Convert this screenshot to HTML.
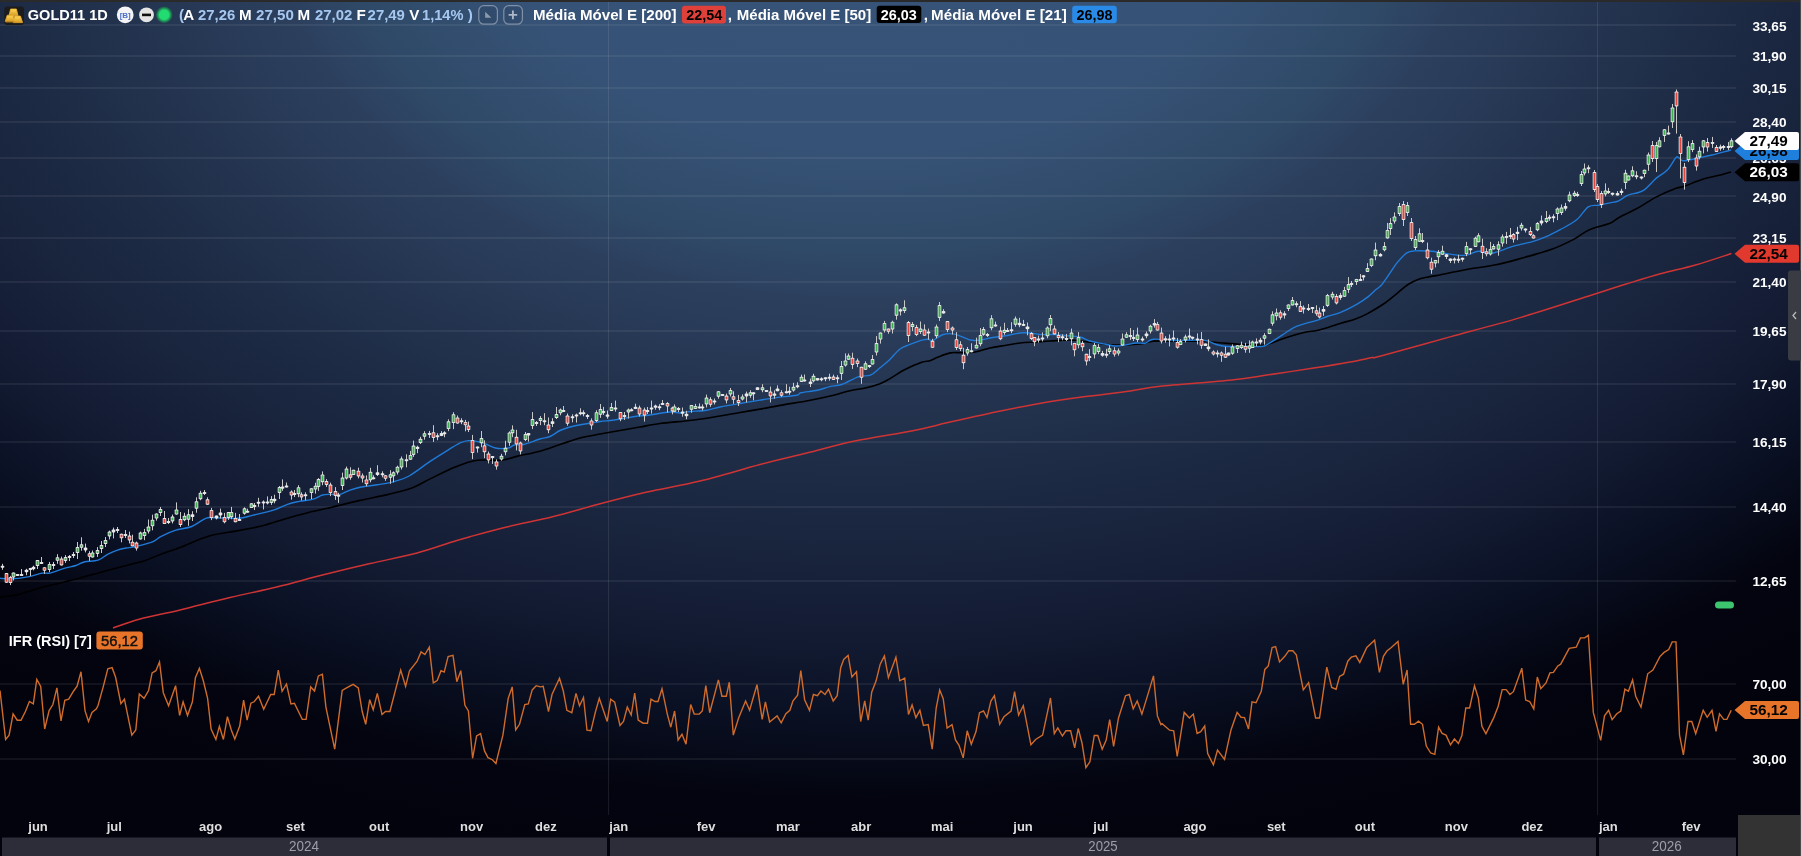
<!DOCTYPE html><html><head><meta charset="utf-8"><title>GOLD11 1D</title><style>
*{margin:0;padding:0;box-sizing:border-box}
html,body{width:1801px;height:856px;overflow:hidden;background:#02030c}
body{position:relative;font-family:"Liberation Sans",sans-serif}
#bg{position:absolute;left:0;top:0;width:1801px;height:856px;
 background: radial-gradient(ellipse 1500px 1000px at 870px -100px, #375478 0%, #365276 25%, #2f4a68 35%, #2c405e 40%, #1e2c46 57%, #19243d 65%, #161f38 70%, #141c34 73%, #0b1226 80.5%, #03040f 90%, #02030c 100%);}
#top{position:absolute;left:0;top:0;width:1800px;height:2px;background:#2a2a2a;border-bottom:1px solid rgba(42,42,42,0.5)}
svg{position:absolute;left:0;top:0;will-change:transform}
text{font-family:"Liberation Sans",sans-serif}
</style></head><body>
<div id="bg"></div>
<svg width="1801" height="856" viewBox="0 0 1801 856">
<g stroke="#ffffff" stroke-opacity="0.13" stroke-width="1">
<line x1="0" y1="25" x2="1736" y2="25"/>
<line x1="0" y1="56" x2="1736" y2="56"/>
<line x1="0" y1="88" x2="1736" y2="88"/>
<line x1="0" y1="122" x2="1736" y2="122"/>
<line x1="0" y1="158" x2="1736" y2="158"/>
<line x1="0" y1="196" x2="1736" y2="196"/>
<line x1="0" y1="238" x2="1736" y2="238"/>
<line x1="0" y1="282" x2="1736" y2="282"/>
<line x1="0" y1="331" x2="1736" y2="331"/>
<line x1="0" y1="384" x2="1736" y2="384"/>
<line x1="0" y1="442" x2="1736" y2="442"/>
<line x1="0" y1="507" x2="1736" y2="507"/>
<line x1="0" y1="581" x2="1736" y2="581"/>
<line x1="0" y1="684" x2="1736" y2="684"/>
<line x1="0" y1="759" x2="1736" y2="759"/>
</g>
<g stroke="#ffffff" stroke-opacity="0.09" stroke-width="1">
<line x1="608.5" y1="2" x2="608.5" y2="815"/><line x1="1597.5" y1="2" x2="1597.5" y2="815"/>
</g>
<path fill="none" stroke="#cf3434" stroke-width="1.5" d="M113,628 C117.5,626.5 128.8,622 140,619 C151.2,616 165,613.6 180,610 C195,606.4 213.9,601.3 230,597.5 C246.1,593.7 261.1,590.8 276.7,587 C292.3,583.2 307.9,578.7 323.5,574.8 C339.1,570.9 354.6,567.2 370.2,563.6 C385.8,560 403.4,556.6 417,553 C430.6,549.4 443.2,544.7 452,542 C460.8,539.3 460.9,539.2 470,536.7 C479.1,534.2 492.8,530.4 506.7,527 C520.6,523.6 537.9,520.5 553.5,516.6 C569.1,512.7 584.6,507.8 600.2,503.7 C615.8,499.6 630.4,495.8 647,492 C663.6,488.2 681.2,485.6 700,481 C718.8,476.4 742.2,469.3 760,464.6 C777.8,459.9 791.2,456.9 806.8,453 C822.4,449.1 838,444.6 853.6,441.3 C869.2,438 888.6,435.1 900.3,433 C912,430.9 915.8,430.1 923.7,428.4 C931.7,426.7 937,425.1 948,422.6 C959,420.1 975.2,416.3 990,413.2 C1004.8,410.1 1021.2,406.6 1036.8,403.9 C1052.4,401.2 1068,398.9 1083.6,396.8 C1099.2,394.7 1117.6,392.8 1130.3,391 C1143,389.2 1143.1,388.1 1160,386.3 C1176.9,384.5 1214,381.9 1231.8,380 C1249.6,378.1 1253.2,377.1 1266.8,375.1 C1280.4,373.1 1300,370.2 1313.6,368.1 C1327.2,366 1338.9,364.1 1348.6,362.3 C1358.3,360.6 1366.8,358.6 1372,357.6 C1377.2,356.6 1367,359.6 1380,356.2 C1393,352.8 1426.6,343.3 1450,336.9 C1473.4,330.5 1496.8,324.5 1520.2,317.6 C1543.6,310.7 1572.8,301.1 1590.3,295.5 C1607.8,289.9 1613.7,287.9 1625.4,284.3 C1637.1,280.7 1648.7,277 1660.4,273.8 C1672.1,270.6 1683.7,268.4 1695.5,265 C1707.3,261.6 1725.4,255.4 1731.4,253.5"/>
<path fill="none" stroke="#000000" stroke-width="1.6" d="M0,597 C2.9,596.6 11.7,596 17.5,594.7 C23.3,593.4 29.1,591 35,589.4 C40.9,587.8 46.4,586.3 52.6,584.8 C58.8,583.2 65.6,581.9 72.4,580.1 C79.2,578.3 87,576 93.4,574.2 C99.8,572.5 105.2,571.2 111,569.6 C116.8,568 122.7,566.5 128.5,564.9 C134.3,563.3 140.2,562.2 146,560.2 C151.8,558.2 157.8,555.3 163.5,553.2 C169.2,551.1 172.4,550.4 180,547.5 C187.6,544.6 199.5,538.7 209.2,535.9 C218.9,533.1 229.6,532.3 238.4,530.6 C247.2,528.9 254,527.9 261.8,525.9 C269.6,523.9 277.3,521.1 285.1,518.9 C292.9,516.7 300.7,514.5 308.5,512.5 C316.3,510.6 323.3,509.2 331.9,507.2 C340.5,505.2 350.4,502.6 360,500.4 C369.6,498.2 380.4,496.2 389.2,494.1 C398,492 405.8,490.2 412.6,487.7 C419.4,485.2 423.3,482.2 430.1,478.9 C436.9,475.6 446.6,470.7 453.4,467.8 C460.2,464.9 466.1,462.7 471,461.4 C475.9,460.1 477.4,460.2 482.6,460 C487.9,459.8 496.6,460.6 502.5,460 C508.4,459.4 511.5,457.6 517.7,456.1 C524,454.6 533,453.1 540,451.2 C547,449.3 553.3,446.7 560,444.5 C566.7,442.3 573.3,439.8 580,438 C586.7,436.2 593.3,435.2 600,434 C606.7,432.8 613.3,431.7 620,430.5 C626.7,429.3 633.3,428.2 640,427 C646.7,425.8 652.5,424.5 660,423.5 C667.5,422.5 677.5,421.8 685,421 C692.5,420.2 699.2,419.3 705,418.5 C710.8,417.7 714.2,417 720,416 C725.8,415 733.3,413.6 740,412.5 C746.7,411.4 752.6,410.4 760,409.1 C767.4,407.8 776.3,406 784.5,404.6 C792.7,403.2 800.9,402.1 809.1,400.5 C817.3,398.9 826.8,396.8 833.6,395.2 C840.4,393.6 844.5,391.9 850,390.7 C855.5,389.5 861.4,389 866.4,387.8 C871.4,386.6 876.2,385.1 880,383.7 C883.8,382.2 884.9,381.5 889.1,379.1 C893.4,376.7 900,372.1 905.5,369.3 C911,366.5 917.7,363.7 921.8,362.3 C925.9,360.9 927.3,361.6 930,360.7 C932.7,359.8 934.8,358.3 938.2,357 C941.6,355.7 946.9,353.6 950.5,352.9 C954.1,352.2 955.9,352.8 960,352.6 C964.1,352.5 970,352.8 975,352 C980,351.2 985,349.1 990,348 C995,346.9 1000,346.3 1005,345.5 C1010,344.7 1015,343.6 1020,343 C1025,342.4 1030,342.3 1035,342 C1040,341.7 1044.2,341.3 1050,341 C1055.8,340.7 1064.2,339.9 1070,340 C1075.8,340.1 1080,340.9 1085,341.5 C1090,342.1 1095,342.9 1100,343.5 C1105,344.1 1108.3,344.9 1115,345 C1121.7,345.1 1133.6,344.6 1140,344 C1146.4,343.4 1147.2,341.6 1153.3,341.1 C1159.4,340.6 1168.3,340.9 1176.7,341 C1185.1,341.1 1196.8,341.2 1203.9,341.5 C1211,341.8 1213.6,342.2 1219.4,342.7 C1225.2,343.1 1232.4,343.8 1238.9,344.2 C1245.4,344.6 1253.7,344.9 1258.3,345 C1262.9,345.1 1262.7,345.8 1266.7,344.8 C1270.7,343.8 1275.9,341.1 1282.1,339 C1288.3,336.9 1297.8,334 1304,332.5 C1310.2,331 1313.4,331.5 1319.4,330 C1325.4,328.5 1334,325.3 1340,323.5 C1346,321.7 1350.9,320.6 1355.4,319 C1359.9,317.4 1362.1,316.6 1367,313.9 C1371.9,311.2 1379.9,306.5 1385,303 C1390.1,299.5 1394,295.9 1397.8,292.8 C1401.6,289.7 1404.6,286.7 1408,284.5 C1411.4,282.3 1414.7,280.6 1418,279.4 C1421.3,278.1 1424.8,277.7 1428,277 C1431.2,276.3 1431,276.6 1437.5,275.4 C1444,274.1 1457,271.3 1466.7,269.5 C1476.5,267.7 1486.2,266.9 1496,264.8 C1505.8,262.8 1516,259.7 1525.2,257.2 C1534.4,254.7 1542.7,252.6 1550.9,249.6 C1559.1,246.6 1567.8,242.4 1574.2,239.1 C1580.6,235.8 1583.4,232.3 1589.4,229.7 C1595.4,227.1 1605.1,225.3 1610,223.3 C1614.9,221.3 1614.1,220.2 1618.7,217.7 C1623.3,215.2 1631.2,211.7 1637.4,208.3 C1643.6,204.9 1649.8,200.4 1656,197.1 C1662.2,193.8 1670.1,190.5 1674.8,188.7 C1679.5,186.9 1679.4,187.9 1684.1,186.3 C1688.8,184.7 1696.6,181.2 1702.8,179.3 C1709,177.4 1716.8,175.9 1721.5,174.7 C1726.2,173.5 1729.4,172.4 1731,171.9"/>
<path fill="none" stroke="#1f7ad8" stroke-width="1.4" d="M0,578.3 C1.9,578.4 6.8,579.2 11.7,578.9 C16.6,578.6 24.1,577.6 29.2,576.6 C34.2,575.6 38.5,573.7 42,573.1 C45.5,572.5 46.5,573.9 50.2,573.1 C53.9,572.3 59.9,569.7 64.2,568.4 C68.5,567.1 72.6,566.6 75.9,565.5 C79.2,564.4 80.4,562.9 84.1,562 C87.8,561.1 94.2,561.5 98.1,560.2 C102,558.9 104.4,556 107.5,554.4 C110.6,552.8 113.7,551.4 116.8,550.3 C119.9,549.2 123.3,548.6 126.2,548 C129.1,547.4 130,547.8 134.3,546.8 C138.6,545.8 147.4,543.9 151.9,542.1 C156.4,540.4 157.3,538.2 161.2,536.3 C165.1,534.3 170.1,532 175.2,530.4 C180.3,528.8 186.6,528.5 191.7,526.5 C196.8,524.5 201.8,519.8 205.7,518.3 C209.6,516.8 209.6,517.7 215,517.7 C220.4,517.7 232.2,518.7 238.4,518.3 C244.6,517.9 246.6,516.8 252.4,515.4 C258.2,514 267.5,512 273.4,510.2 C279.2,508.4 283.2,505.8 287.5,504.3 C291.8,502.8 294.8,502.3 299.1,501.4 C303.4,500.5 309.3,500.2 313.2,499.1 C317.1,498 319.6,495.8 322.5,495 C325.4,494.2 327.8,494.5 330.7,494.4 C333.6,494.3 336.9,495.1 340,494.4 C343.1,493.7 346.1,491.5 349.4,490.3 C352.7,489.1 355.3,488.1 360,487.2 C364.7,486.3 371.7,485.8 377.5,484.8 C383.3,483.8 389.7,482.8 395,481.3 C400.3,479.8 403.2,479.3 409.1,476 C415,472.7 423.7,465.7 430.1,461.4 C436.5,457.1 442.7,453.3 447.6,450.3 C452.5,447.3 455.8,444.9 459.3,443.3 C462.8,441.7 464.7,440.7 468.6,440.6 C472.5,440.5 478.1,441.5 482.6,442.7 C487.1,443.9 491.2,447.1 495.5,448 C499.8,448.9 505.2,448.5 508.3,448 C511.4,447.5 511.7,445.6 514.2,445 C516.7,444.4 519.2,445.5 523.5,444.5 C527.8,443.5 535.6,440.3 540,439 C544.4,437.7 546.7,437.9 550,436.5 C553.3,435.1 556.7,432.1 560,430.5 C563.3,428.9 565.8,428.1 570,427 C574.2,425.9 580,424.9 585,424 C590,423.1 595.8,422.1 600,421.5 C604.2,420.9 606.7,420.9 610,420.5 C613.3,420.1 615.8,419.7 620,419 C624.2,418.3 630,417.2 635,416.5 C640,415.8 644.2,415.8 650,415 C655.8,414.2 665,412.3 670,412 C675,411.7 676.7,413.1 680,413 C683.3,412.9 685.8,411.9 690,411.5 C694.2,411.1 700,411.2 705,410.5 C710,409.8 714.2,408.2 720,407 C725.8,405.8 733.3,404.6 740,403.5 C746.7,402.4 753.9,401.1 760,400.1 C766.1,399.1 770.3,398.4 776.4,397.6 C782.5,396.8 792.7,396 796.8,395.2 C800.9,394.4 797.5,393.5 800.9,392.7 C804.3,391.9 812.5,391.3 817.3,390.3 C822.1,389.3 825.5,387.6 829.6,386.6 C833.7,385.6 837,386.1 841.8,384.5 C846.6,382.9 853.4,378.4 858.2,376.8 C863,375.2 866.9,376.6 870.5,375.1 C874.1,373.6 876.9,370.3 880,367.8 C883.1,365.3 885.8,363.4 889.1,360.3 C892.4,357.2 896.3,351.8 899.7,349.2 C903.1,346.6 905.8,346.2 909.5,344.7 C913.2,343.2 918.6,341.1 921.8,340.2 C924.9,339.3 926.6,339.1 928.4,339.2 C930.2,339.3 930,341.4 932.5,340.6 C935,339.8 939.4,335.6 943.1,334.5 C946.8,333.4 950.1,333.2 954.6,334.1 C959.1,335 965.8,339 970,340 C974.2,341 976.7,340.3 980,340 C983.3,339.7 986.7,338.6 990,338 C993.3,337.4 996.7,337 1000,336.5 C1003.3,336 1006.7,335.6 1010,335 C1013.3,334.4 1016.7,333.3 1020,333 C1023.3,332.7 1026.7,332.8 1030,333 C1033.3,333.2 1035.8,334.2 1040,334.5 C1044.2,334.8 1050.8,334.3 1055,334.5 C1059.2,334.7 1060.8,335.1 1065,335.5 C1069.2,335.9 1075.8,336.1 1080,337 C1084.2,337.9 1085.8,339.8 1090,341 C1094.2,342.2 1100.8,343.2 1105,344 C1109.2,344.8 1111.7,345.8 1115,346 C1118.3,346.2 1121.5,345.5 1125,345 C1128.5,344.5 1132.8,343.3 1136.2,343 C1139.6,342.7 1142.8,343.6 1145.6,343 C1148.4,342.4 1148.1,339.6 1153.3,339.2 C1158.5,338.8 1168.3,340.1 1176.7,340.3 C1185.1,340.5 1197.4,339.7 1203.9,340.3 C1210.4,340.9 1211.6,343.2 1215.5,344.2 C1219.4,345.2 1222,346.1 1227.2,346.5 C1232.4,346.9 1241,346.5 1246.6,346.5 C1252.2,346.5 1257.2,346.8 1260.6,346.5 C1263.9,346.2 1263.1,346.7 1266.7,344.8 C1270.3,342.9 1277.2,338.2 1282.1,335.1 C1287,332 1290.5,328.9 1296.3,326.4 C1302.1,323.9 1311.7,321.9 1316.8,320.3 C1321.9,318.7 1323.2,317.8 1327.1,316.5 C1331,315.2 1335.1,314.6 1340,312.6 C1344.9,310.6 1352,307 1356.7,304.3 C1361.4,301.6 1365.1,299.1 1368.3,296.6 C1371.5,294.1 1373.9,291.3 1376,289.5 C1378.1,287.7 1379.4,287.4 1381.1,285.6 C1382.8,283.8 1384.5,281.1 1386.2,278.6 C1387.9,276.1 1389.5,273.6 1391.4,270.8 C1393.3,268 1395.2,264.9 1397.8,261.9 C1400.4,258.9 1404,254.7 1406.8,252.9 C1409.6,251.1 1410.4,251.2 1414.6,250.9 C1418.8,250.6 1426.9,250.9 1431.7,251.3 C1436.5,251.7 1438,252.4 1443.4,253.1 C1448.9,253.8 1458.6,255.7 1464.4,255.4 C1470.2,255.1 1473.7,251.7 1478.4,251.3 C1483.1,250.9 1486.6,254 1492.4,253.1 C1498.2,252.2 1506.7,248 1513.5,246.1 C1520.3,244.2 1527.8,243 1533.3,241.4 C1538.8,239.8 1541.7,238.6 1546.2,236.7 C1550.7,234.8 1555.1,232.5 1560.2,229.7 C1565.3,226.9 1571.9,223.6 1576.6,219.8 C1581.3,216 1584.6,209.3 1588.3,206.9 C1592,204.5 1595.2,205.9 1598.8,205.2 C1602.4,204.5 1606.7,203.6 1610,202.9 C1613.3,202.2 1615.7,202.1 1618.7,200.8 C1621.7,199.5 1624,196.9 1628,195.2 C1632,193.5 1638.3,193.4 1643,190.6 C1647.7,187.8 1652,181.8 1656,178.4 C1660,175 1664,173.4 1667.3,170 C1670.6,166.6 1673.8,160 1675.7,157.9 C1677.6,155.8 1677.2,157 1678.5,157.5 C1679.8,158 1680.1,160.6 1683.2,160.7 C1686.3,160.8 1692.4,159.1 1697.2,158.2 C1702,157.2 1706.5,156.4 1712.1,155 C1717.7,153.6 1727.8,150.8 1731,150"/>
<g>
<rect x="2" y="563.8" width="1" height="6" fill="#c8c8c8"/>
<rect x="0.7" y="565.8" width="3.6" height="2" rx="0.8" fill="#e8e8e8"/>
<rect x="6" y="573.1" width="1" height="9.7" fill="#c8c8c8"/>
<rect x="4.7" y="573.1" width="3.6" height="9.7" rx="0.8" fill="#e8e8e8"/>
<rect x="5.5" y="574.1" width="2" height="7.7" fill="#e0463c"/>
<rect x="10" y="575.9" width="1" height="9.2" fill="#c8c8c8"/>
<rect x="8.7" y="576.9" width="3.6" height="6.2" rx="0.8" fill="#e8e8e8"/>
<rect x="9.5" y="577.9" width="2" height="4.2" fill="#e0463c"/>
<rect x="13" y="572.5" width="1" height="8" fill="#c8c8c8"/>
<rect x="11.7" y="572.5" width="3.6" height="5" rx="0.8" fill="#e8e8e8"/>
<rect x="12.5" y="573.5" width="2" height="3" fill="#3fae4f"/>
<rect x="17" y="574" width="1" height="2" fill="#c8c8c8"/>
<rect x="15.7" y="574" width="3.6" height="2" rx="0.8" fill="#e8e8e8"/>
<rect x="21" y="569" width="1" height="7" fill="#c8c8c8"/>
<rect x="19.7" y="574" width="3.6" height="2" rx="0.8" fill="#e8e8e8"/>
<rect x="26" y="568.8" width="1" height="6.4" fill="#c8c8c8"/>
<rect x="24.7" y="569.8" width="3.6" height="2.4" rx="0.8" fill="#e8e8e8"/>
<rect x="30" y="567.9" width="1" height="8.2" fill="#c8c8c8"/>
<rect x="28.7" y="567.9" width="3.6" height="2.2" rx="0.8" fill="#e8e8e8"/>
<rect x="33" y="565.7" width="1" height="4.6" fill="#c8c8c8"/>
<rect x="31.7" y="566.7" width="3.6" height="2.6" rx="0.8" fill="#e8e8e8"/>
<rect x="37" y="560" width="1" height="9" fill="#c8c8c8"/>
<rect x="35.7" y="560" width="3.6" height="6" rx="0.8" fill="#e8e8e8"/>
<rect x="36.5" y="561" width="2" height="4" fill="#3fae4f"/>
<rect x="41" y="557" width="1" height="7" fill="#c8c8c8"/>
<rect x="39.7" y="562" width="3.6" height="2" rx="0.8" fill="#e8e8e8"/>
<rect x="44" y="567.2" width="1" height="6.6" fill="#c8c8c8"/>
<rect x="42.7" y="567.2" width="3.6" height="3.6" rx="0.8" fill="#e8e8e8"/>
<rect x="43.5" y="568.2" width="2" height="1.6" fill="#e0463c"/>
<rect x="49" y="561.9" width="1" height="10.2" fill="#c8c8c8"/>
<rect x="47.7" y="563.9" width="3.6" height="6.2" rx="0.8" fill="#e8e8e8"/>
<rect x="48.5" y="564.9" width="2" height="4.2" fill="#3fae4f"/>
<rect x="53" y="561.9" width="1" height="7.2" fill="#c8c8c8"/>
<rect x="51.7" y="563.9" width="3.6" height="2.2" rx="0.8" fill="#e8e8e8"/>
<rect x="57" y="554.2" width="1" height="9.6" fill="#c8c8c8"/>
<rect x="55.7" y="557.2" width="3.6" height="3.6" rx="0.8" fill="#e8e8e8"/>
<rect x="56.5" y="558.2" width="2" height="1.6" fill="#3fae4f"/>
<rect x="61" y="556.6" width="1" height="8.8" fill="#c8c8c8"/>
<rect x="59.7" y="558.6" width="3.6" height="6.8" rx="0.8" fill="#e8e8e8"/>
<rect x="60.5" y="559.6" width="2" height="4.8" fill="#e0463c"/>
<rect x="65" y="555.1" width="1" height="7.8" fill="#c8c8c8"/>
<rect x="63.7" y="557.1" width="3.6" height="3.8" rx="0.8" fill="#e8e8e8"/>
<rect x="64.5" y="558.1" width="2" height="1.8" fill="#3fae4f"/>
<rect x="69" y="555" width="1" height="6" fill="#c8c8c8"/>
<rect x="67.7" y="556" width="3.6" height="2" rx="0.8" fill="#e8e8e8"/>
<rect x="73" y="552" width="1" height="6" fill="#c8c8c8"/>
<rect x="71.7" y="554" width="3.6" height="2" rx="0.8" fill="#e8e8e8"/>
<rect x="77" y="542" width="1" height="17" fill="#c8c8c8"/>
<rect x="75.7" y="547" width="3.6" height="6" rx="0.8" fill="#e8e8e8"/>
<rect x="76.5" y="548" width="2" height="4" fill="#3fae4f"/>
<rect x="81" y="537.3" width="1" height="13.4" fill="#c8c8c8"/>
<rect x="79.7" y="544.3" width="3.6" height="3.4" rx="0.8" fill="#e8e8e8"/>
<rect x="80.5" y="545.3" width="2" height="1.4" fill="#3fae4f"/>
<rect x="85" y="543.6" width="1" height="8.8" fill="#c8c8c8"/>
<rect x="83.7" y="547.6" width="3.6" height="2.8" rx="0.8" fill="#e8e8e8"/>
<rect x="89" y="551.2" width="1" height="9.6" fill="#c8c8c8"/>
<rect x="87.7" y="553.2" width="3.6" height="3.6" rx="0.8" fill="#e8e8e8"/>
<rect x="88.5" y="554.2" width="2" height="1.6" fill="#e0463c"/>
<rect x="92" y="550.5" width="1" height="7" fill="#c8c8c8"/>
<rect x="90.7" y="552.5" width="3.6" height="5" rx="0.8" fill="#e8e8e8"/>
<rect x="91.5" y="553.5" width="2" height="3" fill="#3fae4f"/>
<rect x="97" y="547.1" width="1" height="9.8" fill="#c8c8c8"/>
<rect x="95.7" y="550.1" width="3.6" height="3.8" rx="0.8" fill="#e8e8e8"/>
<rect x="96.5" y="551.1" width="2" height="1.8" fill="#3fae4f"/>
<rect x="101" y="541" width="1" height="12" fill="#c8c8c8"/>
<rect x="99.7" y="545" width="3.6" height="4" rx="0.8" fill="#e8e8e8"/>
<rect x="100.5" y="546" width="2" height="2" fill="#3fae4f"/>
<rect x="105" y="537" width="1" height="10" fill="#c8c8c8"/>
<rect x="103.7" y="540" width="3.6" height="4" rx="0.8" fill="#e8e8e8"/>
<rect x="104.5" y="541" width="2" height="2" fill="#3fae4f"/>
<rect x="109" y="530.6" width="1" height="8.8" fill="#c8c8c8"/>
<rect x="107.7" y="531.6" width="3.6" height="4.8" rx="0.8" fill="#e8e8e8"/>
<rect x="108.5" y="532.6" width="2" height="2.8" fill="#3fae4f"/>
<rect x="113" y="527.6" width="1" height="10.8" fill="#c8c8c8"/>
<rect x="111.7" y="529.6" width="3.6" height="2.8" rx="0.8" fill="#e8e8e8"/>
<rect x="117" y="527" width="1" height="6" fill="#c8c8c8"/>
<rect x="115.7" y="529" width="3.6" height="2" rx="0.8" fill="#e8e8e8"/>
<rect x="121" y="533.7" width="1" height="8.6" fill="#c8c8c8"/>
<rect x="119.7" y="533.7" width="3.6" height="4.6" rx="0.8" fill="#e8e8e8"/>
<rect x="120.5" y="534.7" width="2" height="2.6" fill="#e0463c"/>
<rect x="125" y="530" width="1" height="8" fill="#c8c8c8"/>
<rect x="123.7" y="534" width="3.6" height="2" rx="0.8" fill="#e8e8e8"/>
<rect x="129" y="531.6" width="1" height="11.8" fill="#c8c8c8"/>
<rect x="127.7" y="535.6" width="3.6" height="4.8" rx="0.8" fill="#e8e8e8"/>
<rect x="128.5" y="536.6" width="2" height="2.8" fill="#e0463c"/>
<rect x="132" y="534.7" width="1" height="11.6" fill="#c8c8c8"/>
<rect x="130.7" y="541.7" width="3.6" height="4.6" rx="0.8" fill="#e8e8e8"/>
<rect x="131.5" y="542.7" width="2" height="2.6" fill="#e0463c"/>
<rect x="136" y="541.6" width="1" height="9" fill="#c8c8c8"/>
<rect x="134.7" y="542.6" width="3.6" height="6" rx="0.8" fill="#e8e8e8"/>
<rect x="135.5" y="543.6" width="2" height="4" fill="#e0463c"/>
<rect x="140" y="531.6" width="1" height="7.8" fill="#c8c8c8"/>
<rect x="138.7" y="532.6" width="3.6" height="6.8" rx="0.8" fill="#e8e8e8"/>
<rect x="139.5" y="533.6" width="2" height="4.8" fill="#3fae4f"/>
<rect x="144" y="528.9" width="1" height="11.2" fill="#c8c8c8"/>
<rect x="142.7" y="531.9" width="3.6" height="4.2" rx="0.8" fill="#e8e8e8"/>
<rect x="143.5" y="532.9" width="2" height="2.2" fill="#3fae4f"/>
<rect x="148" y="519.5" width="1" height="14" fill="#c8c8c8"/>
<rect x="146.7" y="526.5" width="3.6" height="5" rx="0.8" fill="#e8e8e8"/>
<rect x="147.5" y="527.5" width="2" height="3" fill="#3fae4f"/>
<rect x="152" y="514.7" width="1" height="15.6" fill="#c8c8c8"/>
<rect x="150.7" y="519.7" width="3.6" height="6.6" rx="0.8" fill="#e8e8e8"/>
<rect x="151.5" y="520.7" width="2" height="4.6" fill="#3fae4f"/>
<rect x="156" y="513.4" width="1" height="7.2" fill="#c8c8c8"/>
<rect x="154.7" y="513.4" width="3.6" height="5.2" rx="0.8" fill="#e8e8e8"/>
<rect x="155.5" y="514.4" width="2" height="3.2" fill="#3fae4f"/>
<rect x="160" y="507" width="1" height="9" fill="#c8c8c8"/>
<rect x="158.7" y="509" width="3.6" height="4" rx="0.8" fill="#e8e8e8"/>
<rect x="159.5" y="510" width="2" height="2" fill="#3fae4f"/>
<rect x="164" y="511" width="1" height="13" fill="#c8c8c8"/>
<rect x="162.7" y="518" width="3.6" height="6" rx="0.8" fill="#e8e8e8"/>
<rect x="163.5" y="519" width="2" height="4" fill="#e0463c"/>
<rect x="168" y="518" width="1" height="6" fill="#c8c8c8"/>
<rect x="166.7" y="521" width="3.6" height="2" rx="0.8" fill="#e8e8e8"/>
<rect x="172" y="514.6" width="1" height="8.8" fill="#c8c8c8"/>
<rect x="170.7" y="516.6" width="3.6" height="4.8" rx="0.8" fill="#e8e8e8"/>
<rect x="171.5" y="517.6" width="2" height="2.8" fill="#3fae4f"/>
<rect x="176" y="502.4" width="1" height="12.2" fill="#c8c8c8"/>
<rect x="174.7" y="509.4" width="3.6" height="5.2" rx="0.8" fill="#e8e8e8"/>
<rect x="175.5" y="510.4" width="2" height="3.2" fill="#3fae4f"/>
<rect x="180" y="512" width="1" height="15" fill="#c8c8c8"/>
<rect x="178.7" y="519" width="3.6" height="6" rx="0.8" fill="#e8e8e8"/>
<rect x="179.5" y="520" width="2" height="4" fill="#e0463c"/>
<rect x="184" y="512.8" width="1" height="8.4" fill="#c8c8c8"/>
<rect x="182.7" y="515.8" width="3.6" height="4.4" rx="0.8" fill="#e8e8e8"/>
<rect x="183.5" y="516.8" width="2" height="2.4" fill="#3fae4f"/>
<rect x="188" y="509.2" width="1" height="16.6" fill="#c8c8c8"/>
<rect x="186.7" y="514.2" width="3.6" height="5.6" rx="0.8" fill="#e8e8e8"/>
<rect x="187.5" y="515.2" width="2" height="3.6" fill="#3fae4f"/>
<rect x="192" y="511.2" width="1" height="9.8" fill="#c8c8c8"/>
<rect x="190.7" y="514.2" width="3.6" height="2.8" rx="0.8" fill="#e8e8e8"/>
<rect x="196" y="497.3" width="1" height="15.4" fill="#c8c8c8"/>
<rect x="194.7" y="501.3" width="3.6" height="7.4" rx="0.8" fill="#e8e8e8"/>
<rect x="195.5" y="502.3" width="2" height="5.4" fill="#3fae4f"/>
<rect x="200" y="490.8" width="1" height="9.4" fill="#c8c8c8"/>
<rect x="198.7" y="492.8" width="3.6" height="6.4" rx="0.8" fill="#e8e8e8"/>
<rect x="199.5" y="493.8" width="2" height="4.4" fill="#3fae4f"/>
<rect x="204" y="490" width="1" height="5" fill="#c8c8c8"/>
<rect x="202.7" y="492" width="3.6" height="2" rx="0.8" fill="#e8e8e8"/>
<rect x="207" y="497.3" width="1" height="7.4" fill="#c8c8c8"/>
<rect x="205.7" y="499.3" width="3.6" height="5.4" rx="0.8" fill="#e8e8e8"/>
<rect x="206.5" y="500.3" width="2" height="3.4" fill="#e0463c"/>
<rect x="211" y="507.9" width="1" height="12.2" fill="#c8c8c8"/>
<rect x="209.7" y="509.9" width="3.6" height="8.2" rx="0.8" fill="#e8e8e8"/>
<rect x="210.5" y="510.9" width="2" height="6.2" fill="#e0463c"/>
<rect x="216" y="515.6" width="1" height="3.8" fill="#c8c8c8"/>
<rect x="214.7" y="515.6" width="3.6" height="2.8" rx="0.8" fill="#e8e8e8"/>
<rect x="220" y="508.6" width="1" height="9.8" fill="#c8c8c8"/>
<rect x="218.7" y="512.6" width="3.6" height="2.8" rx="0.8" fill="#e8e8e8"/>
<rect x="224" y="512.9" width="1" height="10.4" fill="#c8c8c8"/>
<rect x="222.7" y="516.9" width="3.6" height="5.4" rx="0.8" fill="#e8e8e8"/>
<rect x="223.5" y="517.9" width="2" height="3.4" fill="#e0463c"/>
<rect x="228" y="512.1" width="1" height="7.8" fill="#c8c8c8"/>
<rect x="226.7" y="512.1" width="3.6" height="5.8" rx="0.8" fill="#e8e8e8"/>
<rect x="227.5" y="513.1" width="2" height="3.8" fill="#3fae4f"/>
<rect x="231" y="506.9" width="1" height="12.3" fill="#c8c8c8"/>
<rect x="229.7" y="511.9" width="3.6" height="5.3" rx="0.8" fill="#e8e8e8"/>
<rect x="230.5" y="512.9" width="2" height="3.3" fill="#3fae4f"/>
<rect x="235" y="512.9" width="1" height="9.3" fill="#c8c8c8"/>
<rect x="233.7" y="517.9" width="3.6" height="4.3" rx="0.8" fill="#e8e8e8"/>
<rect x="234.5" y="518.9" width="2" height="2.3" fill="#e0463c"/>
<rect x="239" y="514" width="1" height="7" fill="#c8c8c8"/>
<rect x="237.7" y="519" width="3.6" height="2" rx="0.8" fill="#e8e8e8"/>
<rect x="244" y="507.3" width="1" height="7.4" fill="#c8c8c8"/>
<rect x="242.7" y="508.3" width="3.6" height="5.4" rx="0.8" fill="#e8e8e8"/>
<rect x="243.5" y="509.3" width="2" height="3.4" fill="#3fae4f"/>
<rect x="247" y="508.7" width="1" height="4" fill="#c8c8c8"/>
<rect x="245.7" y="510.7" width="3.6" height="2" rx="0.8" fill="#e8e8e8"/>
<rect x="251" y="503.3" width="1" height="4.7" fill="#c8c8c8"/>
<rect x="249.7" y="503.3" width="3.6" height="4.7" rx="0.8" fill="#e8e8e8"/>
<rect x="250.5" y="504.3" width="2" height="2.7" fill="#3fae4f"/>
<rect x="254" y="503" width="1" height="7" fill="#c8c8c8"/>
<rect x="252.7" y="505" width="3.6" height="2" rx="0.8" fill="#e8e8e8"/>
<rect x="258" y="497.8" width="1" height="9" fill="#c8c8c8"/>
<rect x="256.7" y="501.8" width="3.6" height="2" rx="0.8" fill="#e8e8e8"/>
<rect x="263" y="500.4" width="1" height="9" fill="#c8c8c8"/>
<rect x="261.7" y="501.4" width="3.6" height="2" rx="0.8" fill="#e8e8e8"/>
<rect x="267" y="496.4" width="1" height="8" fill="#c8c8c8"/>
<rect x="265.7" y="501.4" width="3.6" height="2" rx="0.8" fill="#e8e8e8"/>
<rect x="271" y="496.1" width="1" height="8.8" fill="#c8c8c8"/>
<rect x="269.7" y="499.1" width="3.6" height="3.8" rx="0.8" fill="#e8e8e8"/>
<rect x="270.5" y="500.1" width="2" height="1.8" fill="#3fae4f"/>
<rect x="274" y="494.7" width="1" height="8.6" fill="#c8c8c8"/>
<rect x="272.7" y="498.7" width="3.6" height="2.6" rx="0.8" fill="#e8e8e8"/>
<rect x="279" y="486" width="1" height="13" fill="#c8c8c8"/>
<rect x="277.7" y="487" width="3.6" height="6" rx="0.8" fill="#e8e8e8"/>
<rect x="278.5" y="488" width="2" height="4" fill="#3fae4f"/>
<rect x="282" y="479.4" width="1" height="11.4" fill="#c8c8c8"/>
<rect x="280.7" y="486.4" width="3.6" height="2.4" rx="0.8" fill="#e8e8e8"/>
<rect x="286" y="482.5" width="1" height="5" fill="#c8c8c8"/>
<rect x="284.7" y="485.5" width="3.6" height="2" rx="0.8" fill="#e8e8e8"/>
<rect x="291" y="490.4" width="1" height="9.2" fill="#c8c8c8"/>
<rect x="289.7" y="491.4" width="3.6" height="4.2" rx="0.8" fill="#e8e8e8"/>
<rect x="290.5" y="492.4" width="2" height="2.2" fill="#e0463c"/>
<rect x="294" y="490" width="1" height="7" fill="#c8c8c8"/>
<rect x="292.7" y="493" width="3.6" height="2" rx="0.8" fill="#e8e8e8"/>
<rect x="298" y="485.2" width="1" height="12" fill="#c8c8c8"/>
<rect x="296.7" y="487.2" width="3.6" height="7" rx="0.8" fill="#e8e8e8"/>
<rect x="297.5" y="488.2" width="2" height="5" fill="#3fae4f"/>
<rect x="301" y="492.3" width="1" height="8.1" fill="#c8c8c8"/>
<rect x="299.7" y="494.3" width="3.6" height="3.1" rx="0.8" fill="#e8e8e8"/>
<rect x="300.5" y="495.3" width="2" height="1.1" fill="#e0463c"/>
<rect x="305" y="492.3" width="1" height="8" fill="#c8c8c8"/>
<rect x="303.7" y="494.3" width="3.6" height="2" rx="0.8" fill="#e8e8e8"/>
<rect x="311" y="488.3" width="1" height="10.8" fill="#c8c8c8"/>
<rect x="309.7" y="488.3" width="3.6" height="4.8" rx="0.8" fill="#e8e8e8"/>
<rect x="310.5" y="489.3" width="2" height="2.8" fill="#3fae4f"/>
<rect x="315" y="482.7" width="1" height="10.9" fill="#c8c8c8"/>
<rect x="313.7" y="485.7" width="3.6" height="3.9" rx="0.8" fill="#e8e8e8"/>
<rect x="314.5" y="486.7" width="2" height="1.9" fill="#3fae4f"/>
<rect x="318" y="478.1" width="1" height="12.8" fill="#c8c8c8"/>
<rect x="316.7" y="479.1" width="3.6" height="7.8" rx="0.8" fill="#e8e8e8"/>
<rect x="317.5" y="480.1" width="2" height="5.8" fill="#3fae4f"/>
<rect x="322" y="471.4" width="1" height="13.8" fill="#c8c8c8"/>
<rect x="320.7" y="474.4" width="3.6" height="7.8" rx="0.8" fill="#e8e8e8"/>
<rect x="321.5" y="475.4" width="2" height="5.8" fill="#3fae4f"/>
<rect x="326" y="479.1" width="1" height="7.8" fill="#c8c8c8"/>
<rect x="324.7" y="481.1" width="3.6" height="3.8" rx="0.8" fill="#e8e8e8"/>
<rect x="325.5" y="482.1" width="2" height="1.8" fill="#e0463c"/>
<rect x="330" y="482.6" width="1" height="13.5" fill="#c8c8c8"/>
<rect x="328.7" y="484.6" width="3.6" height="8.5" rx="0.8" fill="#e8e8e8"/>
<rect x="329.5" y="485.6" width="2" height="6.5" fill="#e0463c"/>
<rect x="335" y="487.1" width="1" height="12.8" fill="#c8c8c8"/>
<rect x="333.7" y="491.1" width="3.6" height="4.8" rx="0.8" fill="#e8e8e8"/>
<rect x="334.5" y="492.1" width="2" height="2.8" fill="#e0463c"/>
<rect x="338" y="492.8" width="1" height="10" fill="#c8c8c8"/>
<rect x="336.7" y="494.8" width="3.6" height="2" rx="0.8" fill="#e8e8e8"/>
<rect x="342" y="472.6" width="1" height="17.4" fill="#c8c8c8"/>
<rect x="340.7" y="477.6" width="3.6" height="8.4" rx="0.8" fill="#e8e8e8"/>
<rect x="341.5" y="478.6" width="2" height="6.4" fill="#3fae4f"/>
<rect x="346" y="466.6" width="1" height="12.9" fill="#c8c8c8"/>
<rect x="344.7" y="468.6" width="3.6" height="9.9" rx="0.8" fill="#e8e8e8"/>
<rect x="345.5" y="469.6" width="2" height="7.9" fill="#3fae4f"/>
<rect x="350" y="467.3" width="1" height="12.4" fill="#c8c8c8"/>
<rect x="348.7" y="474.3" width="3.6" height="3.4" rx="0.8" fill="#e8e8e8"/>
<rect x="349.5" y="475.3" width="2" height="1.4" fill="#e0463c"/>
<rect x="353" y="469.8" width="1" height="5.2" fill="#c8c8c8"/>
<rect x="351.7" y="469.8" width="3.6" height="5.2" rx="0.8" fill="#e8e8e8"/>
<rect x="352.5" y="470.8" width="2" height="3.2" fill="#3fae4f"/>
<rect x="358" y="467.7" width="1" height="10.7" fill="#c8c8c8"/>
<rect x="356.7" y="470.7" width="3.6" height="5.7" rx="0.8" fill="#e8e8e8"/>
<rect x="357.5" y="471.7" width="2" height="3.7" fill="#e0463c"/>
<rect x="362" y="473.5" width="1" height="9" fill="#c8c8c8"/>
<rect x="360.7" y="475.5" width="3.6" height="3" rx="0.8" fill="#e8e8e8"/>
<rect x="361.5" y="476.5" width="2" height="1" fill="#e0463c"/>
<rect x="366" y="475.4" width="1" height="10.9" fill="#c8c8c8"/>
<rect x="364.7" y="479.4" width="3.6" height="4.9" rx="0.8" fill="#e8e8e8"/>
<rect x="365.5" y="480.4" width="2" height="2.9" fill="#e0463c"/>
<rect x="370" y="467.8" width="1" height="14.5" fill="#c8c8c8"/>
<rect x="368.7" y="471.8" width="3.6" height="8.5" rx="0.8" fill="#e8e8e8"/>
<rect x="369.5" y="472.8" width="2" height="6.5" fill="#3fae4f"/>
<rect x="373" y="475.3" width="1" height="4" fill="#c8c8c8"/>
<rect x="371.7" y="477.3" width="3.6" height="2" rx="0.8" fill="#e8e8e8"/>
<rect x="377" y="465.2" width="1" height="10.8" fill="#c8c8c8"/>
<rect x="375.7" y="472.2" width="3.6" height="2.8" rx="0.8" fill="#e8e8e8"/>
<rect x="382" y="471.3" width="1" height="6" fill="#c8c8c8"/>
<rect x="380.7" y="473.3" width="3.6" height="2" rx="0.8" fill="#e8e8e8"/>
<rect x="385" y="475.2" width="1" height="5.6" fill="#c8c8c8"/>
<rect x="383.7" y="475.2" width="3.6" height="3.6" rx="0.8" fill="#e8e8e8"/>
<rect x="384.5" y="476.2" width="2" height="1.6" fill="#e0463c"/>
<rect x="390" y="470.2" width="1" height="13.6" fill="#c8c8c8"/>
<rect x="388.7" y="474.2" width="3.6" height="3.6" rx="0.8" fill="#e8e8e8"/>
<rect x="389.5" y="475.2" width="2" height="1.6" fill="#3fae4f"/>
<rect x="393" y="471.3" width="1" height="11" fill="#c8c8c8"/>
<rect x="391.7" y="472.3" width="3.6" height="4" rx="0.8" fill="#e8e8e8"/>
<rect x="392.5" y="473.3" width="2" height="2" fill="#3fae4f"/>
<rect x="397" y="465.7" width="1" height="8.8" fill="#c8c8c8"/>
<rect x="395.7" y="466.7" width="3.6" height="5.8" rx="0.8" fill="#e8e8e8"/>
<rect x="396.5" y="467.7" width="2" height="3.8" fill="#3fae4f"/>
<rect x="401" y="456.5" width="1" height="13" fill="#c8c8c8"/>
<rect x="399.7" y="458.5" width="3.6" height="9" rx="0.8" fill="#e8e8e8"/>
<rect x="400.5" y="459.5" width="2" height="7" fill="#3fae4f"/>
<rect x="406" y="454.3" width="1" height="13" fill="#c8c8c8"/>
<rect x="404.7" y="459.3" width="3.6" height="2" rx="0.8" fill="#e8e8e8"/>
<rect x="410" y="450.9" width="1" height="8.8" fill="#c8c8c8"/>
<rect x="408.7" y="454.9" width="3.6" height="4.8" rx="0.8" fill="#e8e8e8"/>
<rect x="409.5" y="455.9" width="2" height="2.8" fill="#3fae4f"/>
<rect x="413" y="440.6" width="1" height="16.3" fill="#c8c8c8"/>
<rect x="411.7" y="445.6" width="3.6" height="9.3" rx="0.8" fill="#e8e8e8"/>
<rect x="412.5" y="446.6" width="2" height="7.3" fill="#3fae4f"/>
<rect x="417" y="445.7" width="1" height="7.4" fill="#c8c8c8"/>
<rect x="415.7" y="446.7" width="3.6" height="2.4" rx="0.8" fill="#e8e8e8"/>
<rect x="420" y="436.8" width="1" height="7.2" fill="#c8c8c8"/>
<rect x="418.7" y="438.8" width="3.6" height="4.2" rx="0.8" fill="#e8e8e8"/>
<rect x="419.5" y="439.8" width="2" height="2.2" fill="#3fae4f"/>
<rect x="424" y="431.2" width="1" height="8.5" fill="#c8c8c8"/>
<rect x="422.7" y="433.2" width="3.6" height="3.5" rx="0.8" fill="#e8e8e8"/>
<rect x="423.5" y="434.2" width="2" height="1.5" fill="#3fae4f"/>
<rect x="429" y="430.9" width="1" height="7" fill="#c8c8c8"/>
<rect x="427.7" y="432.9" width="3.6" height="2" rx="0.8" fill="#e8e8e8"/>
<rect x="433" y="425.2" width="1" height="16.7" fill="#c8c8c8"/>
<rect x="431.7" y="432.2" width="3.6" height="5.7" rx="0.8" fill="#e8e8e8"/>
<rect x="432.5" y="433.2" width="2" height="3.7" fill="#e0463c"/>
<rect x="437" y="433.2" width="1" height="7" fill="#c8c8c8"/>
<rect x="435.7" y="435.2" width="3.6" height="2" rx="0.8" fill="#e8e8e8"/>
<rect x="441" y="431.1" width="1" height="5" fill="#c8c8c8"/>
<rect x="439.7" y="433.1" width="3.6" height="3" rx="0.8" fill="#e8e8e8"/>
<rect x="444" y="431.2" width="1" height="6" fill="#c8c8c8"/>
<rect x="442.7" y="432.2" width="3.6" height="2" rx="0.8" fill="#e8e8e8"/>
<rect x="448" y="419.3" width="1" height="11.8" fill="#c8c8c8"/>
<rect x="446.7" y="421.3" width="3.6" height="7.8" rx="0.8" fill="#e8e8e8"/>
<rect x="447.5" y="422.3" width="2" height="5.8" fill="#3fae4f"/>
<rect x="453" y="412.2" width="1" height="16.9" fill="#c8c8c8"/>
<rect x="451.7" y="414.2" width="3.6" height="8.9" rx="0.8" fill="#e8e8e8"/>
<rect x="452.5" y="415.2" width="2" height="6.9" fill="#3fae4f"/>
<rect x="457" y="415.5" width="1" height="8.1" fill="#c8c8c8"/>
<rect x="455.7" y="417.5" width="3.6" height="6.1" rx="0.8" fill="#e8e8e8"/>
<rect x="456.5" y="418.5" width="2" height="4.1" fill="#e0463c"/>
<rect x="461" y="418.2" width="1" height="6" fill="#c8c8c8"/>
<rect x="459.7" y="420.2" width="3.6" height="2" rx="0.8" fill="#e8e8e8"/>
<rect x="465" y="419.9" width="1" height="11.4" fill="#c8c8c8"/>
<rect x="463.7" y="421.9" width="3.6" height="3.4" rx="0.8" fill="#e8e8e8"/>
<rect x="464.5" y="422.9" width="2" height="1.4" fill="#e0463c"/>
<rect x="468" y="421.5" width="1" height="10.5" fill="#c8c8c8"/>
<rect x="466.7" y="425.5" width="3.6" height="4.5" rx="0.8" fill="#e8e8e8"/>
<rect x="467.5" y="426.5" width="2" height="2.5" fill="#e0463c"/>
<rect x="472" y="434.9" width="1" height="24.2" fill="#c8c8c8"/>
<rect x="470.7" y="439.9" width="3.6" height="13.2" rx="0.8" fill="#e8e8e8"/>
<rect x="471.5" y="440.9" width="2" height="11.2" fill="#e0463c"/>
<rect x="477" y="446.6" width="1" height="6" fill="#c8c8c8"/>
<rect x="475.7" y="446.6" width="3.6" height="2" rx="0.8" fill="#e8e8e8"/>
<rect x="481" y="431" width="1" height="16.2" fill="#c8c8c8"/>
<rect x="479.7" y="438" width="3.6" height="5.2" rx="0.8" fill="#e8e8e8"/>
<rect x="480.5" y="439" width="2" height="3.2" fill="#3fae4f"/>
<rect x="484" y="440.3" width="1" height="17.9" fill="#c8c8c8"/>
<rect x="482.7" y="445.3" width="3.6" height="6.9" rx="0.8" fill="#e8e8e8"/>
<rect x="483.5" y="446.3" width="2" height="4.9" fill="#e0463c"/>
<rect x="488" y="451.5" width="1" height="11.9" fill="#c8c8c8"/>
<rect x="486.7" y="453.5" width="3.6" height="6.9" rx="0.8" fill="#e8e8e8"/>
<rect x="487.5" y="454.5" width="2" height="4.9" fill="#e0463c"/>
<rect x="492" y="456" width="1" height="8" fill="#c8c8c8"/>
<rect x="490.7" y="456" width="3.6" height="2" rx="0.8" fill="#e8e8e8"/>
<rect x="496" y="459.4" width="1" height="10.2" fill="#c8c8c8"/>
<rect x="494.7" y="461.4" width="3.6" height="5.2" rx="0.8" fill="#e8e8e8"/>
<rect x="495.5" y="462.4" width="2" height="3.2" fill="#e0463c"/>
<rect x="501" y="453.8" width="1" height="6.8" fill="#c8c8c8"/>
<rect x="499.7" y="455.8" width="3.6" height="3.8" rx="0.8" fill="#e8e8e8"/>
<rect x="500.5" y="456.8" width="2" height="1.8" fill="#3fae4f"/>
<rect x="505" y="440.7" width="1" height="14.6" fill="#c8c8c8"/>
<rect x="503.7" y="447.7" width="3.6" height="4.6" rx="0.8" fill="#e8e8e8"/>
<rect x="504.5" y="448.7" width="2" height="2.6" fill="#3fae4f"/>
<rect x="509" y="431.4" width="1" height="14.4" fill="#c8c8c8"/>
<rect x="507.7" y="432.4" width="3.6" height="10.4" rx="0.8" fill="#e8e8e8"/>
<rect x="508.5" y="433.4" width="2" height="8.4" fill="#3fae4f"/>
<rect x="512" y="425.4" width="1" height="11.8" fill="#c8c8c8"/>
<rect x="510.7" y="429.4" width="3.6" height="3.8" rx="0.8" fill="#e8e8e8"/>
<rect x="511.5" y="430.4" width="2" height="1.8" fill="#3fae4f"/>
<rect x="516" y="429.8" width="1" height="20.6" fill="#c8c8c8"/>
<rect x="514.7" y="436.8" width="3.6" height="7.6" rx="0.8" fill="#e8e8e8"/>
<rect x="515.5" y="437.8" width="2" height="5.6" fill="#e0463c"/>
<rect x="520" y="441.6" width="1" height="12.8" fill="#c8c8c8"/>
<rect x="518.7" y="442.6" width="3.6" height="8.8" rx="0.8" fill="#e8e8e8"/>
<rect x="519.5" y="443.6" width="2" height="6.8" fill="#e0463c"/>
<rect x="525" y="432" width="1" height="9" fill="#c8c8c8"/>
<rect x="523.7" y="434" width="3.6" height="6" rx="0.8" fill="#e8e8e8"/>
<rect x="524.5" y="435" width="2" height="4" fill="#3fae4f"/>
<rect x="528" y="433" width="1" height="8.6" fill="#c8c8c8"/>
<rect x="526.7" y="433" width="3.6" height="2.6" rx="0.8" fill="#e8e8e8"/>
<rect x="532" y="412.1" width="1" height="17" fill="#c8c8c8"/>
<rect x="530.7" y="419.1" width="3.6" height="7" rx="0.8" fill="#e8e8e8"/>
<rect x="531.5" y="420.1" width="2" height="5" fill="#3fae4f"/>
<rect x="536" y="421" width="1" height="5" fill="#c8c8c8"/>
<rect x="534.7" y="422" width="3.6" height="2" rx="0.8" fill="#e8e8e8"/>
<rect x="540" y="416.1" width="1" height="9" fill="#c8c8c8"/>
<rect x="538.7" y="418.1" width="3.6" height="3" rx="0.8" fill="#e8e8e8"/>
<rect x="539.5" y="419.1" width="2" height="1" fill="#3fae4f"/>
<rect x="544" y="413.2" width="1" height="12" fill="#c8c8c8"/>
<rect x="542.7" y="420.2" width="3.6" height="2" rx="0.8" fill="#e8e8e8"/>
<rect x="548" y="417.5" width="1" height="15.7" fill="#c8c8c8"/>
<rect x="546.7" y="424.5" width="3.6" height="5.7" rx="0.8" fill="#e8e8e8"/>
<rect x="547.5" y="425.5" width="2" height="3.7" fill="#e0463c"/>
<rect x="552" y="418.2" width="1" height="8.8" fill="#c8c8c8"/>
<rect x="550.7" y="421.2" width="3.6" height="2.8" rx="0.8" fill="#e8e8e8"/>
<rect x="556" y="407" width="1" height="12" fill="#c8c8c8"/>
<rect x="554.7" y="414" width="3.6" height="4" rx="0.8" fill="#e8e8e8"/>
<rect x="555.5" y="415" width="2" height="2" fill="#3fae4f"/>
<rect x="560" y="408.5" width="1" height="6.8" fill="#c8c8c8"/>
<rect x="558.7" y="409.5" width="3.6" height="3.8" rx="0.8" fill="#e8e8e8"/>
<rect x="559.5" y="410.5" width="2" height="1.8" fill="#3fae4f"/>
<rect x="563" y="406" width="1" height="6" fill="#c8c8c8"/>
<rect x="561.7" y="410" width="3.6" height="2" rx="0.8" fill="#e8e8e8"/>
<rect x="567" y="413.5" width="1" height="12.2" fill="#c8c8c8"/>
<rect x="565.7" y="415.5" width="3.6" height="8.2" rx="0.8" fill="#e8e8e8"/>
<rect x="566.5" y="416.5" width="2" height="6.2" fill="#e0463c"/>
<rect x="572" y="414.3" width="1" height="8" fill="#c8c8c8"/>
<rect x="570.7" y="416.3" width="3.6" height="2" rx="0.8" fill="#e8e8e8"/>
<rect x="576" y="413.6" width="1" height="9" fill="#c8c8c8"/>
<rect x="574.7" y="414.6" width="3.6" height="2" rx="0.8" fill="#e8e8e8"/>
<rect x="580" y="408.3" width="1" height="7" fill="#c8c8c8"/>
<rect x="578.7" y="412.3" width="3.6" height="2" rx="0.8" fill="#e8e8e8"/>
<rect x="583" y="410.3" width="1" height="6" fill="#c8c8c8"/>
<rect x="581.7" y="412.3" width="3.6" height="2" rx="0.8" fill="#e8e8e8"/>
<rect x="587" y="414" width="1" height="5" fill="#c8c8c8"/>
<rect x="585.7" y="415" width="3.6" height="2" rx="0.8" fill="#e8e8e8"/>
<rect x="591" y="418.4" width="1" height="11.2" fill="#c8c8c8"/>
<rect x="589.7" y="420.4" width="3.6" height="5.2" rx="0.8" fill="#e8e8e8"/>
<rect x="590.5" y="421.4" width="2" height="3.2" fill="#e0463c"/>
<rect x="596" y="410.2" width="1" height="11.8" fill="#c8c8c8"/>
<rect x="594.7" y="412.2" width="3.6" height="8.8" rx="0.8" fill="#e8e8e8"/>
<rect x="595.5" y="413.2" width="2" height="6.8" fill="#3fae4f"/>
<rect x="600" y="404" width="1" height="13.8" fill="#c8c8c8"/>
<rect x="598.7" y="409" width="3.6" height="5.8" rx="0.8" fill="#e8e8e8"/>
<rect x="599.5" y="410" width="2" height="3.8" fill="#3fae4f"/>
<rect x="603" y="406.9" width="1" height="8" fill="#c8c8c8"/>
<rect x="601.7" y="410.9" width="3.6" height="2" rx="0.8" fill="#e8e8e8"/>
<rect x="607" y="410.5" width="1" height="8.2" fill="#c8c8c8"/>
<rect x="605.7" y="414.5" width="3.6" height="2.2" rx="0.8" fill="#e8e8e8"/>
<rect x="611" y="403" width="1" height="8" fill="#c8c8c8"/>
<rect x="609.7" y="407" width="3.6" height="4" rx="0.8" fill="#e8e8e8"/>
<rect x="610.5" y="408" width="2" height="2" fill="#3fae4f"/>
<rect x="615" y="400.6" width="1" height="11" fill="#c8c8c8"/>
<rect x="613.7" y="407.6" width="3.6" height="2" rx="0.8" fill="#e8e8e8"/>
<rect x="620" y="412" width="1" height="9.2" fill="#c8c8c8"/>
<rect x="618.7" y="412" width="3.6" height="7.2" rx="0.8" fill="#e8e8e8"/>
<rect x="619.5" y="413" width="2" height="5.2" fill="#e0463c"/>
<rect x="624" y="412" width="1" height="8" fill="#c8c8c8"/>
<rect x="622.7" y="415" width="3.6" height="2" rx="0.8" fill="#e8e8e8"/>
<rect x="628" y="408.5" width="1" height="10" fill="#c8c8c8"/>
<rect x="626.7" y="409.5" width="3.6" height="3" rx="0.8" fill="#e8e8e8"/>
<rect x="627.5" y="410.5" width="2" height="1" fill="#3fae4f"/>
<rect x="631" y="408.2" width="1" height="3" fill="#c8c8c8"/>
<rect x="629.7" y="409.2" width="3.6" height="2" rx="0.8" fill="#e8e8e8"/>
<rect x="635" y="403.7" width="1" height="5.4" fill="#c8c8c8"/>
<rect x="633.7" y="406.7" width="3.6" height="2.4" rx="0.8" fill="#e8e8e8"/>
<rect x="639" y="405.6" width="1" height="10.9" fill="#c8c8c8"/>
<rect x="637.7" y="407.6" width="3.6" height="6.9" rx="0.8" fill="#e8e8e8"/>
<rect x="638.5" y="408.6" width="2" height="4.9" fill="#e0463c"/>
<rect x="644" y="407.6" width="1" height="14" fill="#c8c8c8"/>
<rect x="642.7" y="409.6" width="3.6" height="6" rx="0.8" fill="#e8e8e8"/>
<rect x="643.5" y="410.6" width="2" height="4" fill="#e0463c"/>
<rect x="647" y="407" width="1" height="7" fill="#c8c8c8"/>
<rect x="645.7" y="410" width="3.6" height="2" rx="0.8" fill="#e8e8e8"/>
<rect x="651" y="400.6" width="1" height="13" fill="#c8c8c8"/>
<rect x="649.7" y="407.6" width="3.6" height="2" rx="0.8" fill="#e8e8e8"/>
<rect x="655" y="404.6" width="1" height="5.1" fill="#c8c8c8"/>
<rect x="653.7" y="405.6" width="3.6" height="2.1" rx="0.8" fill="#e8e8e8"/>
<rect x="659" y="404.2" width="1" height="6" fill="#c8c8c8"/>
<rect x="657.7" y="406.2" width="3.6" height="2" rx="0.8" fill="#e8e8e8"/>
<rect x="662" y="400" width="1" height="5" fill="#c8c8c8"/>
<rect x="660.7" y="403" width="3.6" height="2" rx="0.8" fill="#e8e8e8"/>
<rect x="667" y="402.1" width="1" height="10.5" fill="#c8c8c8"/>
<rect x="665.7" y="403.1" width="3.6" height="3.5" rx="0.8" fill="#e8e8e8"/>
<rect x="666.5" y="404.1" width="2" height="1.5" fill="#e0463c"/>
<rect x="672" y="406.6" width="1" height="7.8" fill="#c8c8c8"/>
<rect x="670.7" y="407.6" width="3.6" height="3.8" rx="0.8" fill="#e8e8e8"/>
<rect x="671.5" y="408.6" width="2" height="1.8" fill="#e0463c"/>
<rect x="674" y="404.4" width="1" height="7.3" fill="#c8c8c8"/>
<rect x="672.7" y="406.4" width="3.6" height="5.3" rx="0.8" fill="#e8e8e8"/>
<rect x="673.5" y="407.4" width="2" height="3.3" fill="#3fae4f"/>
<rect x="678" y="407" width="1" height="5" fill="#c8c8c8"/>
<rect x="676.7" y="408" width="3.6" height="2" rx="0.8" fill="#e8e8e8"/>
<rect x="682" y="407.5" width="1" height="9.2" fill="#c8c8c8"/>
<rect x="680.7" y="411.5" width="3.6" height="2.2" rx="0.8" fill="#e8e8e8"/>
<rect x="686" y="410.8" width="1" height="8.4" fill="#c8c8c8"/>
<rect x="684.7" y="413.8" width="3.6" height="2.4" rx="0.8" fill="#e8e8e8"/>
<rect x="691" y="405.1" width="1" height="7.6" fill="#c8c8c8"/>
<rect x="689.7" y="405.1" width="3.6" height="4.6" rx="0.8" fill="#e8e8e8"/>
<rect x="690.5" y="406.1" width="2" height="2.6" fill="#3fae4f"/>
<rect x="695" y="403.9" width="1" height="5" fill="#c8c8c8"/>
<rect x="693.7" y="405.9" width="3.6" height="3" rx="0.8" fill="#e8e8e8"/>
<rect x="694.5" y="406.9" width="2" height="1" fill="#3fae4f"/>
<rect x="699" y="403.4" width="1" height="5" fill="#c8c8c8"/>
<rect x="697.7" y="406.4" width="3.6" height="2" rx="0.8" fill="#e8e8e8"/>
<rect x="702" y="404.4" width="1" height="6" fill="#c8c8c8"/>
<rect x="700.7" y="406.4" width="3.6" height="2" rx="0.8" fill="#e8e8e8"/>
<rect x="706" y="394.6" width="1" height="12.8" fill="#c8c8c8"/>
<rect x="704.7" y="397.6" width="3.6" height="6.8" rx="0.8" fill="#e8e8e8"/>
<rect x="705.5" y="398.6" width="2" height="4.8" fill="#3fae4f"/>
<rect x="710" y="397.2" width="1" height="9.6" fill="#c8c8c8"/>
<rect x="708.7" y="399.2" width="3.6" height="5.6" rx="0.8" fill="#e8e8e8"/>
<rect x="709.5" y="400.2" width="2" height="3.6" fill="#e0463c"/>
<rect x="714" y="398.5" width="1" height="6" fill="#c8c8c8"/>
<rect x="712.7" y="400.5" width="3.6" height="2" rx="0.8" fill="#e8e8e8"/>
<rect x="718" y="391.2" width="1" height="7.5" fill="#c8c8c8"/>
<rect x="716.7" y="391.2" width="3.6" height="5.5" rx="0.8" fill="#e8e8e8"/>
<rect x="717.5" y="392.2" width="2" height="3.5" fill="#3fae4f"/>
<rect x="722" y="394" width="1" height="2" fill="#c8c8c8"/>
<rect x="720.7" y="394" width="3.6" height="2" rx="0.8" fill="#e8e8e8"/>
<rect x="726" y="393.6" width="1" height="9.8" fill="#c8c8c8"/>
<rect x="724.7" y="395.6" width="3.6" height="4.8" rx="0.8" fill="#e8e8e8"/>
<rect x="725.5" y="396.6" width="2" height="2.8" fill="#e0463c"/>
<rect x="730" y="388" width="1" height="8.5" fill="#c8c8c8"/>
<rect x="728.7" y="390" width="3.6" height="4.5" rx="0.8" fill="#e8e8e8"/>
<rect x="729.5" y="391" width="2" height="2.5" fill="#3fae4f"/>
<rect x="733" y="391.3" width="1" height="12.5" fill="#c8c8c8"/>
<rect x="731.7" y="396.3" width="3.6" height="3.5" rx="0.8" fill="#e8e8e8"/>
<rect x="732.5" y="397.3" width="2" height="1.5" fill="#e0463c"/>
<rect x="738" y="394.9" width="1" height="11.1" fill="#c8c8c8"/>
<rect x="736.7" y="399.9" width="3.6" height="3.1" rx="0.8" fill="#e8e8e8"/>
<rect x="737.5" y="400.9" width="2" height="1.1" fill="#e0463c"/>
<rect x="742" y="394.4" width="1" height="6.1" fill="#c8c8c8"/>
<rect x="740.7" y="396.4" width="3.6" height="3.1" rx="0.8" fill="#e8e8e8"/>
<rect x="741.5" y="397.4" width="2" height="1.1" fill="#3fae4f"/>
<rect x="746" y="391.6" width="1" height="10.8" fill="#c8c8c8"/>
<rect x="744.7" y="393.6" width="3.6" height="2.8" rx="0.8" fill="#e8e8e8"/>
<rect x="750" y="390.2" width="1" height="7.6" fill="#c8c8c8"/>
<rect x="748.7" y="392.2" width="3.6" height="3.6" rx="0.8" fill="#e8e8e8"/>
<rect x="749.5" y="393.2" width="2" height="1.6" fill="#3fae4f"/>
<rect x="753" y="392.3" width="1" height="8" fill="#c8c8c8"/>
<rect x="751.7" y="392.3" width="3.6" height="2" rx="0.8" fill="#e8e8e8"/>
<rect x="757" y="387.3" width="1" height="2.8" fill="#c8c8c8"/>
<rect x="755.7" y="387.3" width="3.6" height="2.8" rx="0.8" fill="#e8e8e8"/>
<rect x="762" y="384.2" width="1" height="8" fill="#c8c8c8"/>
<rect x="760.7" y="387.2" width="3.6" height="3" rx="0.8" fill="#e8e8e8"/>
<rect x="761.5" y="388.2" width="2" height="1" fill="#3fae4f"/>
<rect x="766" y="390" width="1" height="2" fill="#c8c8c8"/>
<rect x="764.7" y="390" width="3.6" height="2" rx="0.8" fill="#e8e8e8"/>
<rect x="770" y="386.6" width="1" height="15.8" fill="#c8c8c8"/>
<rect x="768.7" y="391.6" width="3.6" height="4.8" rx="0.8" fill="#e8e8e8"/>
<rect x="769.5" y="392.6" width="2" height="2.8" fill="#e0463c"/>
<rect x="774" y="390.4" width="1" height="8.3" fill="#c8c8c8"/>
<rect x="772.7" y="393.4" width="3.6" height="2.3" rx="0.8" fill="#e8e8e8"/>
<rect x="777" y="385.4" width="1" height="5.8" fill="#c8c8c8"/>
<rect x="775.7" y="388.4" width="3.6" height="2.8" rx="0.8" fill="#e8e8e8"/>
<rect x="781" y="390.2" width="1" height="6.5" fill="#c8c8c8"/>
<rect x="779.7" y="392.2" width="3.6" height="3.5" rx="0.8" fill="#e8e8e8"/>
<rect x="780.5" y="393.2" width="2" height="1.5" fill="#e0463c"/>
<rect x="786" y="384.2" width="1" height="9.1" fill="#c8c8c8"/>
<rect x="784.7" y="391.2" width="3.6" height="2.1" rx="0.8" fill="#e8e8e8"/>
<rect x="789" y="386.7" width="1" height="8" fill="#c8c8c8"/>
<rect x="787.7" y="390.7" width="3.6" height="2" rx="0.8" fill="#e8e8e8"/>
<rect x="793" y="382.8" width="1" height="8.8" fill="#c8c8c8"/>
<rect x="791.7" y="386.8" width="3.6" height="3.8" rx="0.8" fill="#e8e8e8"/>
<rect x="792.5" y="387.8" width="2" height="1.8" fill="#3fae4f"/>
<rect x="797" y="382.3" width="1" height="6" fill="#c8c8c8"/>
<rect x="795.7" y="385.3" width="3.6" height="2" rx="0.8" fill="#e8e8e8"/>
<rect x="801" y="374.7" width="1" height="7.2" fill="#c8c8c8"/>
<rect x="799.7" y="376.7" width="3.6" height="5.2" rx="0.8" fill="#e8e8e8"/>
<rect x="800.5" y="377.7" width="2" height="3.2" fill="#3fae4f"/>
<rect x="804" y="374.5" width="1" height="7" fill="#c8c8c8"/>
<rect x="802.7" y="379.5" width="3.6" height="2" rx="0.8" fill="#e8e8e8"/>
<rect x="810" y="378.6" width="1" height="8.4" fill="#c8c8c8"/>
<rect x="808.7" y="381.6" width="3.6" height="2.4" rx="0.8" fill="#e8e8e8"/>
<rect x="813" y="373.8" width="1" height="8.5" fill="#c8c8c8"/>
<rect x="811.7" y="375.8" width="3.6" height="5.5" rx="0.8" fill="#e8e8e8"/>
<rect x="812.5" y="376.8" width="2" height="3.5" fill="#3fae4f"/>
<rect x="817" y="378.1" width="1" height="2.4" fill="#c8c8c8"/>
<rect x="815.7" y="378.1" width="3.6" height="2.4" rx="0.8" fill="#e8e8e8"/>
<rect x="821" y="377.3" width="1" height="4" fill="#c8c8c8"/>
<rect x="819.7" y="378.3" width="3.6" height="2" rx="0.8" fill="#e8e8e8"/>
<rect x="825" y="377.2" width="1" height="4" fill="#c8c8c8"/>
<rect x="823.7" y="377.2" width="3.6" height="2" rx="0.8" fill="#e8e8e8"/>
<rect x="829" y="373.7" width="1" height="7" fill="#c8c8c8"/>
<rect x="827.7" y="376.7" width="3.6" height="2" rx="0.8" fill="#e8e8e8"/>
<rect x="833" y="374.6" width="1" height="5.3" fill="#c8c8c8"/>
<rect x="831.7" y="376.6" width="3.6" height="3.3" rx="0.8" fill="#e8e8e8"/>
<rect x="832.5" y="377.6" width="2" height="1.3" fill="#e0463c"/>
<rect x="837" y="375.2" width="1" height="8" fill="#c8c8c8"/>
<rect x="835.7" y="377.2" width="3.6" height="2" rx="0.8" fill="#e8e8e8"/>
<rect x="841" y="361" width="1" height="18.9" fill="#c8c8c8"/>
<rect x="839.7" y="366" width="3.6" height="7.9" rx="0.8" fill="#e8e8e8"/>
<rect x="840.5" y="367" width="2" height="5.9" fill="#3fae4f"/>
<rect x="845" y="353.4" width="1" height="13.2" fill="#c8c8c8"/>
<rect x="843.7" y="360.4" width="3.6" height="5.2" rx="0.8" fill="#e8e8e8"/>
<rect x="844.5" y="361.4" width="2" height="3.2" fill="#3fae4f"/>
<rect x="848" y="353.5" width="1" height="6.2" fill="#c8c8c8"/>
<rect x="846.7" y="355.5" width="3.6" height="4.2" rx="0.8" fill="#e8e8e8"/>
<rect x="847.5" y="356.5" width="2" height="2.2" fill="#3fae4f"/>
<rect x="852" y="352.7" width="1" height="16.2" fill="#c8c8c8"/>
<rect x="850.7" y="357.7" width="3.6" height="7.2" rx="0.8" fill="#e8e8e8"/>
<rect x="851.5" y="358.7" width="2" height="5.2" fill="#e0463c"/>
<rect x="857" y="358.5" width="1" height="8.6" fill="#c8c8c8"/>
<rect x="855.7" y="360.5" width="3.6" height="3.6" rx="0.8" fill="#e8e8e8"/>
<rect x="856.5" y="361.5" width="2" height="1.6" fill="#e0463c"/>
<rect x="861" y="366.8" width="1" height="17" fill="#c8c8c8"/>
<rect x="859.7" y="366.8" width="3.6" height="11" rx="0.8" fill="#e8e8e8"/>
<rect x="860.5" y="367.8" width="2" height="9" fill="#e0463c"/>
<rect x="865" y="361.3" width="1" height="8.5" fill="#c8c8c8"/>
<rect x="863.7" y="363.3" width="3.6" height="6.5" rx="0.8" fill="#e8e8e8"/>
<rect x="864.5" y="364.3" width="2" height="4.5" fill="#3fae4f"/>
<rect x="869" y="365" width="1" height="3" fill="#c8c8c8"/>
<rect x="867.7" y="365" width="3.6" height="2" rx="0.8" fill="#e8e8e8"/>
<rect x="872" y="355" width="1" height="9.5" fill="#c8c8c8"/>
<rect x="870.7" y="359" width="3.6" height="5.5" rx="0.8" fill="#e8e8e8"/>
<rect x="871.5" y="360" width="2" height="3.5" fill="#3fae4f"/>
<rect x="876" y="336.1" width="1" height="19.4" fill="#c8c8c8"/>
<rect x="874.7" y="343.1" width="3.6" height="9.4" rx="0.8" fill="#e8e8e8"/>
<rect x="875.5" y="344.1" width="2" height="7.4" fill="#3fae4f"/>
<rect x="880" y="332.6" width="1" height="11" fill="#c8c8c8"/>
<rect x="878.7" y="332.6" width="3.6" height="7" rx="0.8" fill="#e8e8e8"/>
<rect x="879.5" y="333.6" width="2" height="5" fill="#3fae4f"/>
<rect x="884" y="320.9" width="1" height="11.6" fill="#c8c8c8"/>
<rect x="882.7" y="322.9" width="3.6" height="7.6" rx="0.8" fill="#e8e8e8"/>
<rect x="883.5" y="323.9" width="2" height="5.6" fill="#3fae4f"/>
<rect x="888" y="328.6" width="1" height="5.1" fill="#c8c8c8"/>
<rect x="886.7" y="328.6" width="3.6" height="3.1" rx="0.8" fill="#e8e8e8"/>
<rect x="887.5" y="329.6" width="2" height="1.1" fill="#e0463c"/>
<rect x="892" y="320.7" width="1" height="12.8" fill="#c8c8c8"/>
<rect x="890.7" y="321.7" width="3.6" height="7.8" rx="0.8" fill="#e8e8e8"/>
<rect x="891.5" y="322.7" width="2" height="5.8" fill="#3fae4f"/>
<rect x="896" y="303.3" width="1" height="16.4" fill="#c8c8c8"/>
<rect x="894.7" y="304.3" width="3.6" height="11.4" rx="0.8" fill="#e8e8e8"/>
<rect x="895.5" y="305.3" width="2" height="9.4" fill="#3fae4f"/>
<rect x="900" y="308.3" width="1" height="7.2" fill="#c8c8c8"/>
<rect x="898.7" y="309.3" width="3.6" height="2.2" rx="0.8" fill="#e8e8e8"/>
<rect x="904" y="300.3" width="1" height="12.7" fill="#c8c8c8"/>
<rect x="902.7" y="307.3" width="3.6" height="3.7" rx="0.8" fill="#e8e8e8"/>
<rect x="903.5" y="308.3" width="2" height="1.7" fill="#3fae4f"/>
<rect x="908" y="321" width="1" height="21" fill="#c8c8c8"/>
<rect x="906.7" y="322" width="3.6" height="14" rx="0.8" fill="#e8e8e8"/>
<rect x="907.5" y="323" width="2" height="12" fill="#e0463c"/>
<rect x="912" y="322.1" width="1" height="9" fill="#c8c8c8"/>
<rect x="910.7" y="324.1" width="3.6" height="3" rx="0.8" fill="#e8e8e8"/>
<rect x="911.5" y="325.1" width="2" height="1" fill="#3fae4f"/>
<rect x="916" y="324.9" width="1" height="11.2" fill="#c8c8c8"/>
<rect x="914.7" y="326.9" width="3.6" height="8.2" rx="0.8" fill="#e8e8e8"/>
<rect x="915.5" y="327.9" width="2" height="6.2" fill="#e0463c"/>
<rect x="920" y="321.5" width="1" height="12.5" fill="#c8c8c8"/>
<rect x="918.7" y="328.5" width="3.6" height="3.5" rx="0.8" fill="#e8e8e8"/>
<rect x="919.5" y="329.5" width="2" height="1.5" fill="#3fae4f"/>
<rect x="924" y="324.4" width="1" height="11.4" fill="#c8c8c8"/>
<rect x="922.7" y="329.4" width="3.6" height="6.4" rx="0.8" fill="#e8e8e8"/>
<rect x="923.5" y="330.4" width="2" height="4.4" fill="#e0463c"/>
<rect x="928" y="328.6" width="1" height="11" fill="#c8c8c8"/>
<rect x="926.7" y="331.6" width="3.6" height="2" rx="0.8" fill="#e8e8e8"/>
<rect x="932" y="338.8" width="1" height="9" fill="#c8c8c8"/>
<rect x="930.7" y="340.8" width="3.6" height="7" rx="0.8" fill="#e8e8e8"/>
<rect x="931.5" y="341.8" width="2" height="5" fill="#e0463c"/>
<rect x="936" y="324.5" width="1" height="13.7" fill="#c8c8c8"/>
<rect x="934.7" y="326.5" width="3.6" height="9.7" rx="0.8" fill="#e8e8e8"/>
<rect x="935.5" y="327.5" width="2" height="7.7" fill="#3fae4f"/>
<rect x="939" y="302" width="1" height="18.9" fill="#c8c8c8"/>
<rect x="937.7" y="305" width="3.6" height="12.9" rx="0.8" fill="#e8e8e8"/>
<rect x="938.5" y="306" width="2" height="10.9" fill="#3fae4f"/>
<rect x="943" y="309.1" width="1" height="4.5" fill="#c8c8c8"/>
<rect x="941.7" y="311.1" width="3.6" height="2.5" rx="0.8" fill="#e8e8e8"/>
<rect x="947" y="321.1" width="1" height="11" fill="#c8c8c8"/>
<rect x="945.7" y="321.1" width="3.6" height="9" rx="0.8" fill="#e8e8e8"/>
<rect x="946.5" y="322.1" width="2" height="7" fill="#e0463c"/>
<rect x="952" y="326.5" width="1" height="8" fill="#c8c8c8"/>
<rect x="950.7" y="327.5" width="3.6" height="3" rx="0.8" fill="#e8e8e8"/>
<rect x="951.5" y="328.5" width="2" height="1" fill="#e0463c"/>
<rect x="956" y="332.2" width="1" height="17.8" fill="#c8c8c8"/>
<rect x="954.7" y="339.2" width="3.6" height="8.8" rx="0.8" fill="#e8e8e8"/>
<rect x="955.5" y="340.2" width="2" height="6.8" fill="#e0463c"/>
<rect x="960" y="341.2" width="1" height="9.8" fill="#c8c8c8"/>
<rect x="958.7" y="344.2" width="3.6" height="4.8" rx="0.8" fill="#e8e8e8"/>
<rect x="959.5" y="345.2" width="2" height="2.8" fill="#e0463c"/>
<rect x="963" y="347.8" width="1" height="21.4" fill="#c8c8c8"/>
<rect x="961.7" y="354.8" width="3.6" height="8.4" rx="0.8" fill="#e8e8e8"/>
<rect x="962.5" y="355.8" width="2" height="6.4" fill="#e0463c"/>
<rect x="967" y="347" width="1" height="8.6" fill="#c8c8c8"/>
<rect x="965.7" y="349" width="3.6" height="4.6" rx="0.8" fill="#e8e8e8"/>
<rect x="966.5" y="350" width="2" height="2.6" fill="#3fae4f"/>
<rect x="971" y="343.3" width="1" height="9" fill="#c8c8c8"/>
<rect x="969.7" y="350.3" width="3.6" height="2" rx="0.8" fill="#e8e8e8"/>
<rect x="976" y="337.7" width="1" height="10.8" fill="#c8c8c8"/>
<rect x="974.7" y="344.7" width="3.6" height="3.8" rx="0.8" fill="#e8e8e8"/>
<rect x="975.5" y="345.7" width="2" height="1.8" fill="#3fae4f"/>
<rect x="980" y="328" width="1" height="18.2" fill="#c8c8c8"/>
<rect x="978.7" y="335" width="3.6" height="9.2" rx="0.8" fill="#e8e8e8"/>
<rect x="979.5" y="336" width="2" height="7.2" fill="#3fae4f"/>
<rect x="983" y="327.1" width="1" height="8.6" fill="#c8c8c8"/>
<rect x="981.7" y="329.1" width="3.6" height="5.6" rx="0.8" fill="#e8e8e8"/>
<rect x="982.5" y="330.1" width="2" height="3.6" fill="#3fae4f"/>
<rect x="987" y="332.9" width="1" height="4" fill="#c8c8c8"/>
<rect x="985.7" y="333.9" width="3.6" height="2" rx="0.8" fill="#e8e8e8"/>
<rect x="991" y="315.2" width="1" height="15" fill="#c8c8c8"/>
<rect x="989.7" y="318.2" width="3.6" height="10" rx="0.8" fill="#e8e8e8"/>
<rect x="990.5" y="319.2" width="2" height="8" fill="#3fae4f"/>
<rect x="995" y="321.6" width="1" height="5" fill="#c8c8c8"/>
<rect x="993.7" y="324.6" width="3.6" height="2" rx="0.8" fill="#e8e8e8"/>
<rect x="1000" y="326.6" width="1" height="13.6" fill="#c8c8c8"/>
<rect x="998.7" y="330.6" width="3.6" height="8.6" rx="0.8" fill="#e8e8e8"/>
<rect x="999.5" y="331.6" width="2" height="6.6" fill="#e0463c"/>
<rect x="1004" y="322.8" width="1" height="12.1" fill="#c8c8c8"/>
<rect x="1002.7" y="329.8" width="3.6" height="3.1" rx="0.8" fill="#e8e8e8"/>
<rect x="1003.5" y="330.8" width="2" height="1.1" fill="#3fae4f"/>
<rect x="1007" y="328" width="1" height="4" fill="#c8c8c8"/>
<rect x="1005.7" y="330" width="3.6" height="2" rx="0.8" fill="#e8e8e8"/>
<rect x="1011" y="322.2" width="1" height="11" fill="#c8c8c8"/>
<rect x="1009.7" y="329.2" width="3.6" height="2" rx="0.8" fill="#e8e8e8"/>
<rect x="1015" y="316.5" width="1" height="10.2" fill="#c8c8c8"/>
<rect x="1013.7" y="318.5" width="3.6" height="6.2" rx="0.8" fill="#e8e8e8"/>
<rect x="1014.5" y="319.5" width="2" height="4.2" fill="#3fae4f"/>
<rect x="1019" y="317.8" width="1" height="9.4" fill="#c8c8c8"/>
<rect x="1017.7" y="322.8" width="3.6" height="2.4" rx="0.8" fill="#e8e8e8"/>
<rect x="1023" y="319.9" width="1" height="6" fill="#c8c8c8"/>
<rect x="1021.7" y="323.9" width="3.6" height="2" rx="0.8" fill="#e8e8e8"/>
<rect x="1027" y="322.5" width="1" height="12.8" fill="#c8c8c8"/>
<rect x="1025.7" y="326.5" width="3.6" height="2.8" rx="0.8" fill="#e8e8e8"/>
<rect x="1031" y="332.1" width="1" height="7.9" fill="#c8c8c8"/>
<rect x="1029.7" y="333.1" width="3.6" height="5.9" rx="0.8" fill="#e8e8e8"/>
<rect x="1030.5" y="334.1" width="2" height="3.9" fill="#e0463c"/>
<rect x="1034" y="337" width="1" height="9.2" fill="#c8c8c8"/>
<rect x="1032.7" y="337" width="3.6" height="5.2" rx="0.8" fill="#e8e8e8"/>
<rect x="1033.5" y="338" width="2" height="3.2" fill="#e0463c"/>
<rect x="1038" y="335.6" width="1" height="7" fill="#c8c8c8"/>
<rect x="1036.7" y="338.6" width="3.6" height="2" rx="0.8" fill="#e8e8e8"/>
<rect x="1042" y="332.4" width="1" height="9" fill="#c8c8c8"/>
<rect x="1040.7" y="337.4" width="3.6" height="2" rx="0.8" fill="#e8e8e8"/>
<rect x="1047" y="326.4" width="1" height="11.9" fill="#c8c8c8"/>
<rect x="1045.7" y="327.4" width="3.6" height="8.9" rx="0.8" fill="#e8e8e8"/>
<rect x="1046.5" y="328.4" width="2" height="6.9" fill="#3fae4f"/>
<rect x="1050" y="315" width="1" height="16.2" fill="#c8c8c8"/>
<rect x="1048.7" y="318" width="3.6" height="7.2" rx="0.8" fill="#e8e8e8"/>
<rect x="1049.5" y="319" width="2" height="5.2" fill="#3fae4f"/>
<rect x="1054" y="325.5" width="1" height="8.9" fill="#c8c8c8"/>
<rect x="1052.7" y="328.5" width="3.6" height="5.9" rx="0.8" fill="#e8e8e8"/>
<rect x="1053.5" y="329.5" width="2" height="3.9" fill="#e0463c"/>
<rect x="1058" y="332" width="1" height="10.1" fill="#c8c8c8"/>
<rect x="1056.7" y="335" width="3.6" height="3.1" rx="0.8" fill="#e8e8e8"/>
<rect x="1057.5" y="336" width="2" height="1.1" fill="#e0463c"/>
<rect x="1062" y="334.3" width="1" height="6" fill="#c8c8c8"/>
<rect x="1060.7" y="336.3" width="3.6" height="2" rx="0.8" fill="#e8e8e8"/>
<rect x="1066" y="333.9" width="1" height="7" fill="#c8c8c8"/>
<rect x="1064.7" y="337.9" width="3.6" height="2" rx="0.8" fill="#e8e8e8"/>
<rect x="1071" y="328.6" width="1" height="16.7" fill="#c8c8c8"/>
<rect x="1069.7" y="332.6" width="3.6" height="6.7" rx="0.8" fill="#e8e8e8"/>
<rect x="1070.5" y="333.6" width="2" height="4.7" fill="#3fae4f"/>
<rect x="1074" y="342.9" width="1" height="13.4" fill="#c8c8c8"/>
<rect x="1072.7" y="342.9" width="3.6" height="7.4" rx="0.8" fill="#e8e8e8"/>
<rect x="1073.5" y="343.9" width="2" height="5.4" fill="#e0463c"/>
<rect x="1078" y="332.1" width="1" height="16.2" fill="#c8c8c8"/>
<rect x="1076.7" y="337.1" width="3.6" height="8.2" rx="0.8" fill="#e8e8e8"/>
<rect x="1077.5" y="338.1" width="2" height="6.2" fill="#3fae4f"/>
<rect x="1082" y="340.9" width="1" height="10.3" fill="#c8c8c8"/>
<rect x="1080.7" y="342.9" width="3.6" height="4.3" rx="0.8" fill="#e8e8e8"/>
<rect x="1081.5" y="343.9" width="2" height="2.3" fill="#e0463c"/>
<rect x="1086" y="353.8" width="1" height="11.6" fill="#c8c8c8"/>
<rect x="1084.7" y="353.8" width="3.6" height="7.6" rx="0.8" fill="#e8e8e8"/>
<rect x="1085.5" y="354.8" width="2" height="5.6" fill="#e0463c"/>
<rect x="1089" y="349.1" width="1" height="12" fill="#c8c8c8"/>
<rect x="1087.7" y="356.1" width="3.6" height="2" rx="0.8" fill="#e8e8e8"/>
<rect x="1094" y="342.9" width="1" height="15.5" fill="#c8c8c8"/>
<rect x="1092.7" y="344.9" width="3.6" height="9.5" rx="0.8" fill="#e8e8e8"/>
<rect x="1093.5" y="345.9" width="2" height="7.5" fill="#3fae4f"/>
<rect x="1098" y="344.1" width="1" height="10" fill="#c8c8c8"/>
<rect x="1096.7" y="347.1" width="3.6" height="5" rx="0.8" fill="#e8e8e8"/>
<rect x="1097.5" y="348.1" width="2" height="3" fill="#3fae4f"/>
<rect x="1102" y="350.9" width="1" height="5.8" fill="#c8c8c8"/>
<rect x="1100.7" y="352.9" width="3.6" height="2.8" rx="0.8" fill="#e8e8e8"/>
<rect x="1106" y="348.8" width="1" height="9" fill="#c8c8c8"/>
<rect x="1104.7" y="353.8" width="3.6" height="2" rx="0.8" fill="#e8e8e8"/>
<rect x="1109" y="345.2" width="1" height="8.8" fill="#c8c8c8"/>
<rect x="1107.7" y="348.2" width="3.6" height="3.8" rx="0.8" fill="#e8e8e8"/>
<rect x="1108.5" y="349.2" width="2" height="1.8" fill="#3fae4f"/>
<rect x="1114" y="347.2" width="1" height="9.4" fill="#c8c8c8"/>
<rect x="1112.7" y="350.2" width="3.6" height="4.4" rx="0.8" fill="#e8e8e8"/>
<rect x="1113.5" y="351.2" width="2" height="2.4" fill="#e0463c"/>
<rect x="1118" y="348.4" width="1" height="7.2" fill="#c8c8c8"/>
<rect x="1116.7" y="350.4" width="3.6" height="3.2" rx="0.8" fill="#e8e8e8"/>
<rect x="1117.5" y="351.4" width="2" height="1.2" fill="#3fae4f"/>
<rect x="1122" y="333.5" width="1" height="12" fill="#c8c8c8"/>
<rect x="1120.7" y="338.5" width="3.6" height="7" rx="0.8" fill="#e8e8e8"/>
<rect x="1121.5" y="339.5" width="2" height="5" fill="#3fae4f"/>
<rect x="1126" y="332.2" width="1" height="5.6" fill="#c8c8c8"/>
<rect x="1124.7" y="334.2" width="3.6" height="3.6" rx="0.8" fill="#e8e8e8"/>
<rect x="1125.5" y="335.2" width="2" height="1.6" fill="#3fae4f"/>
<rect x="1130" y="328" width="1" height="12" fill="#c8c8c8"/>
<rect x="1128.7" y="335" width="3.6" height="2" rx="0.8" fill="#e8e8e8"/>
<rect x="1133" y="330" width="1" height="11" fill="#c8c8c8"/>
<rect x="1131.7" y="337" width="3.6" height="2" rx="0.8" fill="#e8e8e8"/>
<rect x="1137" y="327.6" width="1" height="14.4" fill="#c8c8c8"/>
<rect x="1135.7" y="334.6" width="3.6" height="5.4" rx="0.8" fill="#e8e8e8"/>
<rect x="1136.5" y="335.6" width="2" height="3.4" fill="#3fae4f"/>
<rect x="1142" y="336.6" width="1" height="5" fill="#c8c8c8"/>
<rect x="1140.7" y="338.6" width="3.6" height="2" rx="0.8" fill="#e8e8e8"/>
<rect x="1146" y="331.5" width="1" height="6.8" fill="#c8c8c8"/>
<rect x="1144.7" y="333.5" width="3.6" height="2.8" rx="0.8" fill="#e8e8e8"/>
<rect x="1150" y="324.7" width="1" height="8.8" fill="#c8c8c8"/>
<rect x="1148.7" y="325.7" width="3.6" height="5.8" rx="0.8" fill="#e8e8e8"/>
<rect x="1149.5" y="326.7" width="2" height="3.8" fill="#3fae4f"/>
<rect x="1154" y="319.1" width="1" height="8.5" fill="#c8c8c8"/>
<rect x="1152.7" y="323.1" width="3.6" height="2.5" rx="0.8" fill="#e8e8e8"/>
<rect x="1157" y="321.9" width="1" height="8.7" fill="#c8c8c8"/>
<rect x="1155.7" y="323.9" width="3.6" height="6.7" rx="0.8" fill="#e8e8e8"/>
<rect x="1156.5" y="324.9" width="2" height="4.7" fill="#e0463c"/>
<rect x="1161" y="327.6" width="1" height="15.9" fill="#c8c8c8"/>
<rect x="1159.7" y="332.6" width="3.6" height="8.9" rx="0.8" fill="#e8e8e8"/>
<rect x="1160.5" y="333.6" width="2" height="6.9" fill="#e0463c"/>
<rect x="1165" y="336.2" width="1" height="6.4" fill="#c8c8c8"/>
<rect x="1163.7" y="338.2" width="3.6" height="2.4" rx="0.8" fill="#e8e8e8"/>
<rect x="1169" y="334.4" width="1" height="12" fill="#c8c8c8"/>
<rect x="1167.7" y="338.4" width="3.6" height="2" rx="0.8" fill="#e8e8e8"/>
<rect x="1173" y="330.5" width="1" height="11" fill="#c8c8c8"/>
<rect x="1171.7" y="337.5" width="3.6" height="2" rx="0.8" fill="#e8e8e8"/>
<rect x="1177" y="337.9" width="1" height="10.8" fill="#c8c8c8"/>
<rect x="1175.7" y="341.9" width="3.6" height="5.8" rx="0.8" fill="#e8e8e8"/>
<rect x="1176.5" y="342.9" width="2" height="3.8" fill="#e0463c"/>
<rect x="1180" y="339.1" width="1" height="6" fill="#c8c8c8"/>
<rect x="1178.7" y="341.1" width="3.6" height="4" rx="0.8" fill="#e8e8e8"/>
<rect x="1179.5" y="342.1" width="2" height="2" fill="#3fae4f"/>
<rect x="1185" y="334.6" width="1" height="7.8" fill="#c8c8c8"/>
<rect x="1183.7" y="336.6" width="3.6" height="3.8" rx="0.8" fill="#e8e8e8"/>
<rect x="1184.5" y="337.6" width="2" height="1.8" fill="#3fae4f"/>
<rect x="1189" y="328.5" width="1" height="11.1" fill="#c8c8c8"/>
<rect x="1187.7" y="335.5" width="3.6" height="2.1" rx="0.8" fill="#e8e8e8"/>
<rect x="1192" y="336.7" width="1" height="3" fill="#c8c8c8"/>
<rect x="1190.7" y="336.7" width="3.6" height="2" rx="0.8" fill="#e8e8e8"/>
<rect x="1197" y="333.4" width="1" height="11" fill="#c8c8c8"/>
<rect x="1195.7" y="338.4" width="3.6" height="2" rx="0.8" fill="#e8e8e8"/>
<rect x="1201" y="332" width="1" height="16.8" fill="#c8c8c8"/>
<rect x="1199.7" y="339" width="3.6" height="6.8" rx="0.8" fill="#e8e8e8"/>
<rect x="1200.5" y="340" width="2" height="4.8" fill="#e0463c"/>
<rect x="1205" y="343.6" width="1" height="2.4" fill="#c8c8c8"/>
<rect x="1203.7" y="343.6" width="3.6" height="2.4" rx="0.8" fill="#e8e8e8"/>
<rect x="1208" y="339.4" width="1" height="11.8" fill="#c8c8c8"/>
<rect x="1206.7" y="346.4" width="3.6" height="2.8" rx="0.8" fill="#e8e8e8"/>
<rect x="1213" y="350.4" width="1" height="5.1" fill="#c8c8c8"/>
<rect x="1211.7" y="351.4" width="3.6" height="3.1" rx="0.8" fill="#e8e8e8"/>
<rect x="1212.5" y="352.4" width="2" height="1.1" fill="#e0463c"/>
<rect x="1217" y="350.4" width="1" height="7" fill="#c8c8c8"/>
<rect x="1215.7" y="352.4" width="3.6" height="2" rx="0.8" fill="#e8e8e8"/>
<rect x="1221" y="351.4" width="1" height="10.4" fill="#c8c8c8"/>
<rect x="1219.7" y="352.4" width="3.6" height="3.4" rx="0.8" fill="#e8e8e8"/>
<rect x="1220.5" y="353.4" width="2" height="1.4" fill="#e0463c"/>
<rect x="1225" y="346.7" width="1" height="11" fill="#c8c8c8"/>
<rect x="1223.7" y="353.7" width="3.6" height="4" rx="0.8" fill="#e8e8e8"/>
<rect x="1224.5" y="354.7" width="2" height="2" fill="#e0463c"/>
<rect x="1228" y="352.6" width="1" height="3" fill="#c8c8c8"/>
<rect x="1226.7" y="352.6" width="3.6" height="3" rx="0.8" fill="#e8e8e8"/>
<rect x="1232" y="344.4" width="1" height="10.4" fill="#c8c8c8"/>
<rect x="1230.7" y="346.4" width="3.6" height="7.4" rx="0.8" fill="#e8e8e8"/>
<rect x="1231.5" y="347.4" width="2" height="5.4" fill="#3fae4f"/>
<rect x="1237" y="345.2" width="1" height="7.8" fill="#c8c8c8"/>
<rect x="1235.7" y="345.2" width="3.6" height="3.8" rx="0.8" fill="#e8e8e8"/>
<rect x="1236.5" y="346.2" width="2" height="1.8" fill="#3fae4f"/>
<rect x="1241" y="341.7" width="1" height="7.4" fill="#c8c8c8"/>
<rect x="1239.7" y="344.7" width="3.6" height="3.4" rx="0.8" fill="#e8e8e8"/>
<rect x="1240.5" y="345.7" width="2" height="1.4" fill="#3fae4f"/>
<rect x="1245" y="342.9" width="1" height="9.8" fill="#c8c8c8"/>
<rect x="1243.7" y="345.9" width="3.6" height="3.8" rx="0.8" fill="#e8e8e8"/>
<rect x="1244.5" y="346.9" width="2" height="1.8" fill="#e0463c"/>
<rect x="1249" y="340.4" width="1" height="12.4" fill="#c8c8c8"/>
<rect x="1247.7" y="345.4" width="3.6" height="3.4" rx="0.8" fill="#e8e8e8"/>
<rect x="1248.5" y="346.4" width="2" height="1.4" fill="#3fae4f"/>
<rect x="1252" y="340.6" width="1" height="7.4" fill="#c8c8c8"/>
<rect x="1250.7" y="341.6" width="3.6" height="6.4" rx="0.8" fill="#e8e8e8"/>
<rect x="1251.5" y="342.6" width="2" height="4.4" fill="#3fae4f"/>
<rect x="1256" y="338.4" width="1" height="8" fill="#c8c8c8"/>
<rect x="1254.7" y="341.4" width="3.6" height="2" rx="0.8" fill="#e8e8e8"/>
<rect x="1260" y="337.8" width="1" height="6.7" fill="#c8c8c8"/>
<rect x="1258.7" y="339.8" width="3.6" height="2.7" rx="0.8" fill="#e8e8e8"/>
<rect x="1264" y="333.2" width="1" height="11.5" fill="#c8c8c8"/>
<rect x="1262.7" y="335.2" width="3.6" height="3.5" rx="0.8" fill="#e8e8e8"/>
<rect x="1263.5" y="336.2" width="2" height="1.5" fill="#3fae4f"/>
<rect x="1269" y="328.7" width="1" height="5.4" fill="#c8c8c8"/>
<rect x="1267.7" y="328.7" width="3.6" height="5.4" rx="0.8" fill="#e8e8e8"/>
<rect x="1268.5" y="329.7" width="2" height="3.4" fill="#3fae4f"/>
<rect x="1272" y="311.3" width="1" height="14.4" fill="#c8c8c8"/>
<rect x="1270.7" y="314.3" width="3.6" height="9.4" rx="0.8" fill="#e8e8e8"/>
<rect x="1271.5" y="315.3" width="2" height="7.4" fill="#3fae4f"/>
<rect x="1276" y="308.5" width="1" height="11.8" fill="#c8c8c8"/>
<rect x="1274.7" y="312.5" width="3.6" height="3.8" rx="0.8" fill="#e8e8e8"/>
<rect x="1275.5" y="313.5" width="2" height="1.8" fill="#3fae4f"/>
<rect x="1280" y="310.3" width="1" height="9.4" fill="#c8c8c8"/>
<rect x="1278.7" y="312.3" width="3.6" height="5.4" rx="0.8" fill="#e8e8e8"/>
<rect x="1279.5" y="313.3" width="2" height="3.4" fill="#e0463c"/>
<rect x="1284" y="311.2" width="1" height="7.4" fill="#c8c8c8"/>
<rect x="1282.7" y="313.2" width="3.6" height="2.4" rx="0.8" fill="#e8e8e8"/>
<rect x="1288" y="304.4" width="1" height="6.6" fill="#c8c8c8"/>
<rect x="1286.7" y="304.4" width="3.6" height="4.6" rx="0.8" fill="#e8e8e8"/>
<rect x="1287.5" y="305.4" width="2" height="2.6" fill="#3fae4f"/>
<rect x="1292" y="297" width="1" height="8.4" fill="#c8c8c8"/>
<rect x="1290.7" y="300" width="3.6" height="5.4" rx="0.8" fill="#e8e8e8"/>
<rect x="1291.5" y="301" width="2" height="3.4" fill="#3fae4f"/>
<rect x="1296" y="301.3" width="1" height="6" fill="#c8c8c8"/>
<rect x="1294.7" y="303.3" width="3.6" height="2" rx="0.8" fill="#e8e8e8"/>
<rect x="1300" y="301.1" width="1" height="10.8" fill="#c8c8c8"/>
<rect x="1298.7" y="306.1" width="3.6" height="5.8" rx="0.8" fill="#e8e8e8"/>
<rect x="1299.5" y="307.1" width="2" height="3.8" fill="#e0463c"/>
<rect x="1303" y="305.5" width="1" height="8" fill="#c8c8c8"/>
<rect x="1301.7" y="307.5" width="3.6" height="2" rx="0.8" fill="#e8e8e8"/>
<rect x="1308" y="304" width="1" height="7" fill="#c8c8c8"/>
<rect x="1306.7" y="308" width="3.6" height="2" rx="0.8" fill="#e8e8e8"/>
<rect x="1312" y="307" width="1" height="6" fill="#c8c8c8"/>
<rect x="1310.7" y="307" width="3.6" height="2" rx="0.8" fill="#e8e8e8"/>
<rect x="1316" y="305.3" width="1" height="10.4" fill="#c8c8c8"/>
<rect x="1314.7" y="310.3" width="3.6" height="3.4" rx="0.8" fill="#e8e8e8"/>
<rect x="1315.5" y="311.3" width="2" height="1.4" fill="#e0463c"/>
<rect x="1319" y="307.6" width="1" height="10.8" fill="#c8c8c8"/>
<rect x="1317.7" y="312.6" width="3.6" height="4.8" rx="0.8" fill="#e8e8e8"/>
<rect x="1318.5" y="313.6" width="2" height="2.8" fill="#e0463c"/>
<rect x="1323" y="306" width="1" height="9.8" fill="#c8c8c8"/>
<rect x="1321.7" y="309" width="3.6" height="2.8" rx="0.8" fill="#e8e8e8"/>
<rect x="1327" y="293.9" width="1" height="13" fill="#c8c8c8"/>
<rect x="1325.7" y="294.9" width="3.6" height="11" rx="0.8" fill="#e8e8e8"/>
<rect x="1326.5" y="295.9" width="2" height="9" fill="#3fae4f"/>
<rect x="1332" y="291.8" width="1" height="7.8" fill="#c8c8c8"/>
<rect x="1330.7" y="293.8" width="3.6" height="3.8" rx="0.8" fill="#e8e8e8"/>
<rect x="1331.5" y="294.8" width="2" height="1.8" fill="#3fae4f"/>
<rect x="1336" y="294" width="1" height="10.4" fill="#c8c8c8"/>
<rect x="1334.7" y="296" width="3.6" height="7.4" rx="0.8" fill="#e8e8e8"/>
<rect x="1335.5" y="297" width="2" height="5.4" fill="#e0463c"/>
<rect x="1340" y="292.9" width="1" height="7" fill="#c8c8c8"/>
<rect x="1338.7" y="294.9" width="3.6" height="3" rx="0.8" fill="#e8e8e8"/>
<rect x="1344" y="286.9" width="1" height="9.9" fill="#c8c8c8"/>
<rect x="1342.7" y="289.9" width="3.6" height="6.9" rx="0.8" fill="#e8e8e8"/>
<rect x="1343.5" y="290.9" width="2" height="4.9" fill="#3fae4f"/>
<rect x="1348" y="277.1" width="1" height="15.8" fill="#c8c8c8"/>
<rect x="1346.7" y="284.1" width="3.6" height="5.8" rx="0.8" fill="#e8e8e8"/>
<rect x="1347.5" y="285.1" width="2" height="3.8" fill="#3fae4f"/>
<rect x="1351" y="281" width="1" height="6" fill="#c8c8c8"/>
<rect x="1349.7" y="283" width="3.6" height="2" rx="0.8" fill="#e8e8e8"/>
<rect x="1356" y="278.9" width="1" height="6.1" fill="#c8c8c8"/>
<rect x="1354.7" y="278.9" width="3.6" height="3.1" rx="0.8" fill="#e8e8e8"/>
<rect x="1355.5" y="279.9" width="2" height="1.1" fill="#3fae4f"/>
<rect x="1360" y="274" width="1" height="7" fill="#c8c8c8"/>
<rect x="1358.7" y="279" width="3.6" height="2" rx="0.8" fill="#e8e8e8"/>
<rect x="1363" y="275.2" width="1" height="5.2" fill="#c8c8c8"/>
<rect x="1361.7" y="275.2" width="3.6" height="2.2" rx="0.8" fill="#e8e8e8"/>
<rect x="1367" y="263.1" width="1" height="8.8" fill="#c8c8c8"/>
<rect x="1365.7" y="268.1" width="3.6" height="3.8" rx="0.8" fill="#e8e8e8"/>
<rect x="1366.5" y="269.1" width="2" height="1.8" fill="#3fae4f"/>
<rect x="1371" y="258.5" width="1" height="8.6" fill="#c8c8c8"/>
<rect x="1369.7" y="258.5" width="3.6" height="7.6" rx="0.8" fill="#e8e8e8"/>
<rect x="1370.5" y="259.5" width="2" height="5.6" fill="#3fae4f"/>
<rect x="1375" y="242.6" width="1" height="17.6" fill="#c8c8c8"/>
<rect x="1373.7" y="249.6" width="3.6" height="6.6" rx="0.8" fill="#e8e8e8"/>
<rect x="1374.5" y="250.6" width="2" height="4.6" fill="#3fae4f"/>
<rect x="1380" y="253" width="1" height="3.4" fill="#c8c8c8"/>
<rect x="1378.7" y="254" width="3.6" height="2.4" rx="0.8" fill="#e8e8e8"/>
<rect x="1384" y="242.1" width="1" height="9.2" fill="#c8c8c8"/>
<rect x="1382.7" y="246.1" width="3.6" height="4.2" rx="0.8" fill="#e8e8e8"/>
<rect x="1383.5" y="247.1" width="2" height="2.2" fill="#3fae4f"/>
<rect x="1387" y="222.9" width="1" height="15.5" fill="#c8c8c8"/>
<rect x="1385.7" y="229.9" width="3.6" height="8.5" rx="0.8" fill="#e8e8e8"/>
<rect x="1386.5" y="230.9" width="2" height="6.5" fill="#3fae4f"/>
<rect x="1390" y="218.1" width="1" height="16.9" fill="#c8c8c8"/>
<rect x="1388.7" y="223.1" width="3.6" height="5.9" rx="0.8" fill="#e8e8e8"/>
<rect x="1389.5" y="224.1" width="2" height="3.9" fill="#3fae4f"/>
<rect x="1394" y="212.4" width="1" height="11.2" fill="#c8c8c8"/>
<rect x="1392.7" y="216.4" width="3.6" height="5.2" rx="0.8" fill="#e8e8e8"/>
<rect x="1393.5" y="217.4" width="2" height="3.2" fill="#3fae4f"/>
<rect x="1419" y="228.3" width="1" height="13.5" fill="#c8c8c8"/>
<rect x="1417.7" y="233.3" width="3.6" height="8.5" rx="0.8" fill="#e8e8e8"/>
<rect x="1418.5" y="234.3" width="2" height="6.5" fill="#3fae4f"/>
<rect x="1422" y="233" width="1" height="10.1" fill="#c8c8c8"/>
<rect x="1420.7" y="240" width="3.6" height="2.1" rx="0.8" fill="#e8e8e8"/>
<rect x="1427" y="242.6" width="1" height="16.7" fill="#c8c8c8"/>
<rect x="1425.7" y="249.6" width="3.6" height="8.7" rx="0.8" fill="#e8e8e8"/>
<rect x="1426.5" y="250.6" width="2" height="6.7" fill="#e0463c"/>
<rect x="1431" y="257.7" width="1" height="16" fill="#c8c8c8"/>
<rect x="1429.7" y="261.7" width="3.6" height="8" rx="0.8" fill="#e8e8e8"/>
<rect x="1430.5" y="262.7" width="2" height="6" fill="#e0463c"/>
<rect x="1435" y="260" width="1" height="7.4" fill="#c8c8c8"/>
<rect x="1433.7" y="260" width="3.6" height="3.4" rx="0.8" fill="#e8e8e8"/>
<rect x="1434.5" y="261" width="2" height="1.4" fill="#3fae4f"/>
<rect x="1438" y="250.1" width="1" height="13.2" fill="#c8c8c8"/>
<rect x="1436.7" y="252.1" width="3.6" height="5.2" rx="0.8" fill="#e8e8e8"/>
<rect x="1437.5" y="253.1" width="2" height="3.2" fill="#3fae4f"/>
<rect x="1442" y="245.7" width="1" height="9.1" fill="#c8c8c8"/>
<rect x="1440.7" y="250.7" width="3.6" height="4.1" rx="0.8" fill="#e8e8e8"/>
<rect x="1441.5" y="251.7" width="2" height="2.1" fill="#3fae4f"/>
<rect x="1446" y="254.3" width="1" height="4.7" fill="#c8c8c8"/>
<rect x="1444.7" y="254.3" width="3.6" height="2.7" rx="0.8" fill="#e8e8e8"/>
<rect x="1450" y="258.5" width="1" height="4.5" fill="#c8c8c8"/>
<rect x="1448.7" y="258.5" width="3.6" height="2.5" rx="0.8" fill="#e8e8e8"/>
<rect x="1454" y="257.4" width="1" height="6" fill="#c8c8c8"/>
<rect x="1452.7" y="258.4" width="3.6" height="2" rx="0.8" fill="#e8e8e8"/>
<rect x="1458" y="254.8" width="1" height="8" fill="#c8c8c8"/>
<rect x="1456.7" y="258.8" width="3.6" height="2" rx="0.8" fill="#e8e8e8"/>
<rect x="1462" y="257.7" width="1" height="4" fill="#c8c8c8"/>
<rect x="1460.7" y="257.7" width="3.6" height="2" rx="0.8" fill="#e8e8e8"/>
<rect x="1466" y="241.9" width="1" height="14.2" fill="#c8c8c8"/>
<rect x="1464.7" y="245.9" width="3.6" height="8.2" rx="0.8" fill="#e8e8e8"/>
<rect x="1465.5" y="246.9" width="2" height="6.2" fill="#3fae4f"/>
<rect x="1470" y="248.3" width="1" height="6" fill="#c8c8c8"/>
<rect x="1468.7" y="248.3" width="3.6" height="2" rx="0.8" fill="#e8e8e8"/>
<rect x="1475" y="236.7" width="1" height="10.2" fill="#c8c8c8"/>
<rect x="1473.7" y="237.7" width="3.6" height="9.2" rx="0.8" fill="#e8e8e8"/>
<rect x="1474.5" y="238.7" width="2" height="7.2" fill="#3fae4f"/>
<rect x="1478" y="233.2" width="1" height="9.1" fill="#c8c8c8"/>
<rect x="1476.7" y="235.2" width="3.6" height="7.1" rx="0.8" fill="#e8e8e8"/>
<rect x="1477.5" y="236.2" width="2" height="5.1" fill="#3fae4f"/>
<rect x="1482" y="238.7" width="1" height="20.3" fill="#c8c8c8"/>
<rect x="1480.7" y="245.7" width="3.6" height="7.3" rx="0.8" fill="#e8e8e8"/>
<rect x="1481.5" y="246.7" width="2" height="5.3" fill="#e0463c"/>
<rect x="1486" y="248.2" width="1" height="8.1" fill="#c8c8c8"/>
<rect x="1484.7" y="251.2" width="3.6" height="3.1" rx="0.8" fill="#e8e8e8"/>
<rect x="1485.5" y="252.2" width="2" height="1.1" fill="#e0463c"/>
<rect x="1490" y="241.9" width="1" height="13.7" fill="#c8c8c8"/>
<rect x="1488.7" y="248.9" width="3.6" height="5.7" rx="0.8" fill="#e8e8e8"/>
<rect x="1489.5" y="249.9" width="2" height="3.7" fill="#3fae4f"/>
<rect x="1493" y="244" width="1" height="5.4" fill="#c8c8c8"/>
<rect x="1491.7" y="246" width="3.6" height="3.4" rx="0.8" fill="#e8e8e8"/>
<rect x="1492.5" y="247" width="2" height="1.4" fill="#3fae4f"/>
<rect x="1498" y="241.3" width="1" height="14.4" fill="#c8c8c8"/>
<rect x="1496.7" y="244.3" width="3.6" height="5.4" rx="0.8" fill="#e8e8e8"/>
<rect x="1497.5" y="245.3" width="2" height="3.4" fill="#3fae4f"/>
<rect x="1502" y="234.4" width="1" height="12.2" fill="#c8c8c8"/>
<rect x="1500.7" y="236.4" width="3.6" height="7.2" rx="0.8" fill="#e8e8e8"/>
<rect x="1501.5" y="237.4" width="2" height="5.2" fill="#3fae4f"/>
<rect x="1506" y="231.9" width="1" height="12" fill="#c8c8c8"/>
<rect x="1504.7" y="235.9" width="3.6" height="2" rx="0.8" fill="#e8e8e8"/>
<rect x="1510" y="228" width="1" height="11" fill="#c8c8c8"/>
<rect x="1508.7" y="235" width="3.6" height="2" rx="0.8" fill="#e8e8e8"/>
<rect x="1513" y="233.1" width="1" height="9.5" fill="#c8c8c8"/>
<rect x="1511.7" y="234.1" width="3.6" height="5.5" rx="0.8" fill="#e8e8e8"/>
<rect x="1512.5" y="235.1" width="2" height="3.5" fill="#e0463c"/>
<rect x="1517" y="226.8" width="1" height="13.3" fill="#c8c8c8"/>
<rect x="1515.7" y="231.8" width="3.6" height="2.3" rx="0.8" fill="#e8e8e8"/>
<rect x="1521" y="222.8" width="1" height="7.8" fill="#c8c8c8"/>
<rect x="1519.7" y="224.8" width="3.6" height="3.8" rx="0.8" fill="#e8e8e8"/>
<rect x="1520.5" y="225.8" width="2" height="1.8" fill="#3fae4f"/>
<rect x="1525" y="228.5" width="1" height="4" fill="#c8c8c8"/>
<rect x="1523.7" y="228.5" width="3.6" height="2" rx="0.8" fill="#e8e8e8"/>
<rect x="1530" y="226.9" width="1" height="9.1" fill="#c8c8c8"/>
<rect x="1528.7" y="230.9" width="3.6" height="4.1" rx="0.8" fill="#e8e8e8"/>
<rect x="1529.5" y="231.9" width="2" height="2.1" fill="#e0463c"/>
<rect x="1533" y="234.2" width="1" height="4.3" fill="#c8c8c8"/>
<rect x="1531.7" y="235.2" width="3.6" height="3.3" rx="0.8" fill="#e8e8e8"/>
<rect x="1532.5" y="236.2" width="2" height="1.3" fill="#e0463c"/>
<rect x="1537" y="222.1" width="1" height="9.1" fill="#c8c8c8"/>
<rect x="1535.7" y="223.1" width="3.6" height="7.1" rx="0.8" fill="#e8e8e8"/>
<rect x="1536.5" y="224.1" width="2" height="5.1" fill="#3fae4f"/>
<rect x="1541" y="215.6" width="1" height="9.8" fill="#c8c8c8"/>
<rect x="1539.7" y="220.6" width="3.6" height="2.8" rx="0.8" fill="#e8e8e8"/>
<rect x="1546" y="211" width="1" height="12.1" fill="#c8c8c8"/>
<rect x="1544.7" y="218" width="3.6" height="4.1" rx="0.8" fill="#e8e8e8"/>
<rect x="1545.5" y="219" width="2" height="2.1" fill="#3fae4f"/>
<rect x="1549" y="214.8" width="1" height="6" fill="#c8c8c8"/>
<rect x="1547.7" y="216.8" width="3.6" height="2" rx="0.8" fill="#e8e8e8"/>
<rect x="1553" y="214.3" width="1" height="8" fill="#c8c8c8"/>
<rect x="1551.7" y="216.3" width="3.6" height="2" rx="0.8" fill="#e8e8e8"/>
<rect x="1557" y="207.4" width="1" height="12.7" fill="#c8c8c8"/>
<rect x="1555.7" y="208.4" width="3.6" height="5.7" rx="0.8" fill="#e8e8e8"/>
<rect x="1556.5" y="209.4" width="2" height="3.7" fill="#3fae4f"/>
<rect x="1561" y="204.5" width="1" height="10.5" fill="#c8c8c8"/>
<rect x="1559.7" y="207.5" width="3.6" height="5.5" rx="0.8" fill="#e8e8e8"/>
<rect x="1560.5" y="208.5" width="2" height="3.5" fill="#3fae4f"/>
<rect x="1565" y="202.9" width="1" height="7.8" fill="#c8c8c8"/>
<rect x="1563.7" y="205.9" width="3.6" height="2.8" rx="0.8" fill="#e8e8e8"/>
<rect x="1569" y="191.6" width="1" height="10.6" fill="#c8c8c8"/>
<rect x="1567.7" y="194.6" width="3.6" height="6.6" rx="0.8" fill="#e8e8e8"/>
<rect x="1568.5" y="195.6" width="2" height="4.6" fill="#3fae4f"/>
<rect x="1574" y="190.8" width="1" height="6.1" fill="#c8c8c8"/>
<rect x="1572.7" y="192.8" width="3.6" height="3.1" rx="0.8" fill="#e8e8e8"/>
<rect x="1573.5" y="193.8" width="2" height="1.1" fill="#3fae4f"/>
<rect x="1577" y="191.9" width="1" height="5" fill="#c8c8c8"/>
<rect x="1575.7" y="193.9" width="3.6" height="2" rx="0.8" fill="#e8e8e8"/>
<rect x="1584" y="163.5" width="1" height="11.9" fill="#c8c8c8"/>
<rect x="1582.7" y="168.5" width="3.6" height="4.9" rx="0.8" fill="#e8e8e8"/>
<rect x="1583.5" y="169.5" width="2" height="2.9" fill="#3fae4f"/>
<rect x="1588" y="165.2" width="1" height="8" fill="#c8c8c8"/>
<rect x="1586.7" y="167.2" width="3.6" height="2" rx="0.8" fill="#e8e8e8"/>
<rect x="1605" y="183.4" width="1" height="13" fill="#c8c8c8"/>
<rect x="1603.7" y="190.4" width="3.6" height="4" rx="0.8" fill="#e8e8e8"/>
<rect x="1604.5" y="191.4" width="2" height="2" fill="#3fae4f"/>
<rect x="1608" y="187.9" width="1" height="6" fill="#c8c8c8"/>
<rect x="1606.7" y="190.9" width="3.6" height="2" rx="0.8" fill="#e8e8e8"/>
<rect x="1612" y="192.7" width="1" height="3" fill="#c8c8c8"/>
<rect x="1610.7" y="192.7" width="3.6" height="2" rx="0.8" fill="#e8e8e8"/>
<rect x="1617" y="191.1" width="1" height="4.4" fill="#c8c8c8"/>
<rect x="1615.7" y="193.1" width="3.6" height="2.4" rx="0.8" fill="#e8e8e8"/>
<rect x="1621" y="188.7" width="1" height="6.4" fill="#c8c8c8"/>
<rect x="1619.7" y="190.7" width="3.6" height="2.4" rx="0.8" fill="#e8e8e8"/>
<rect x="1625" y="169.8" width="1" height="19.3" fill="#c8c8c8"/>
<rect x="1623.7" y="172.8" width="3.6" height="10.3" rx="0.8" fill="#e8e8e8"/>
<rect x="1624.5" y="173.8" width="2" height="8.3" fill="#3fae4f"/>
<rect x="1628" y="175.5" width="1" height="5" fill="#c8c8c8"/>
<rect x="1626.7" y="175.5" width="3.6" height="5" rx="0.8" fill="#e8e8e8"/>
<rect x="1627.5" y="176.5" width="2" height="3" fill="#3fae4f"/>
<rect x="1632" y="166.3" width="1" height="10.9" fill="#c8c8c8"/>
<rect x="1630.7" y="170.3" width="3.6" height="5.9" rx="0.8" fill="#e8e8e8"/>
<rect x="1631.5" y="171.3" width="2" height="3.9" fill="#3fae4f"/>
<rect x="1636" y="171.2" width="1" height="8" fill="#c8c8c8"/>
<rect x="1634.7" y="175.2" width="3.6" height="2" rx="0.8" fill="#e8e8e8"/>
<rect x="1641" y="176.5" width="1" height="3" fill="#c8c8c8"/>
<rect x="1639.7" y="176.5" width="3.6" height="2" rx="0.8" fill="#e8e8e8"/>
<rect x="1644" y="169.7" width="1" height="7.4" fill="#c8c8c8"/>
<rect x="1642.7" y="169.7" width="3.6" height="4.4" rx="0.8" fill="#e8e8e8"/>
<rect x="1643.5" y="170.7" width="2" height="2.4" fill="#3fae4f"/>
<rect x="1648" y="152.5" width="1" height="18.3" fill="#c8c8c8"/>
<rect x="1646.7" y="154.5" width="3.6" height="10.3" rx="0.8" fill="#e8e8e8"/>
<rect x="1647.5" y="155.5" width="2" height="8.3" fill="#3fae4f"/>
<rect x="1659" y="137.3" width="1" height="10" fill="#c8c8c8"/>
<rect x="1657.7" y="140.3" width="3.6" height="7" rx="0.8" fill="#e8e8e8"/>
<rect x="1658.5" y="141.3" width="2" height="5" fill="#3fae4f"/>
<rect x="1664" y="129.2" width="1" height="12.7" fill="#c8c8c8"/>
<rect x="1662.7" y="129.2" width="3.6" height="6.7" rx="0.8" fill="#e8e8e8"/>
<rect x="1663.5" y="130.2" width="2" height="4.7" fill="#3fae4f"/>
<rect x="1668" y="125.6" width="1" height="9" fill="#c8c8c8"/>
<rect x="1666.7" y="132.6" width="3.6" height="2" rx="0.8" fill="#e8e8e8"/>
<rect x="1688" y="141.2" width="1" height="20.9" fill="#c8c8c8"/>
<rect x="1686.7" y="146.2" width="3.6" height="13.9" rx="0.8" fill="#e8e8e8"/>
<rect x="1687.5" y="147.2" width="2" height="11.9" fill="#3fae4f"/>
<rect x="1692" y="140.1" width="1" height="12" fill="#c8c8c8"/>
<rect x="1690.7" y="143.1" width="3.6" height="7" rx="0.8" fill="#e8e8e8"/>
<rect x="1691.5" y="144.1" width="2" height="5" fill="#3fae4f"/>
<rect x="1696" y="154.4" width="1" height="16.2" fill="#c8c8c8"/>
<rect x="1694.7" y="157.4" width="3.6" height="9.2" rx="0.8" fill="#e8e8e8"/>
<rect x="1695.5" y="158.4" width="2" height="7.2" fill="#e0463c"/>
<rect x="1699" y="146.7" width="1" height="12.7" fill="#c8c8c8"/>
<rect x="1697.7" y="150.7" width="3.6" height="6.7" rx="0.8" fill="#e8e8e8"/>
<rect x="1698.5" y="151.7" width="2" height="4.7" fill="#3fae4f"/>
<rect x="1703" y="140.2" width="1" height="13.2" fill="#c8c8c8"/>
<rect x="1701.7" y="140.2" width="3.6" height="7.2" rx="0.8" fill="#e8e8e8"/>
<rect x="1702.5" y="141.2" width="2" height="5.2" fill="#3fae4f"/>
<rect x="1707" y="138" width="1" height="13.6" fill="#c8c8c8"/>
<rect x="1705.7" y="142" width="3.6" height="5.6" rx="0.8" fill="#e8e8e8"/>
<rect x="1706.5" y="143" width="2" height="3.6" fill="#e0463c"/>
<rect x="1712" y="136.9" width="1" height="11" fill="#c8c8c8"/>
<rect x="1710.7" y="141.9" width="3.6" height="2" rx="0.8" fill="#e8e8e8"/>
<rect x="1716" y="145" width="1" height="6.9" fill="#c8c8c8"/>
<rect x="1714.7" y="147" width="3.6" height="4.9" rx="0.8" fill="#e8e8e8"/>
<rect x="1715.5" y="148" width="2" height="2.9" fill="#e0463c"/>
<rect x="1720" y="144.6" width="1" height="6.1" fill="#c8c8c8"/>
<rect x="1718.7" y="146.6" width="3.6" height="2.1" rx="0.8" fill="#e8e8e8"/>
<rect x="1723" y="145" width="1" height="5" fill="#c8c8c8"/>
<rect x="1721.7" y="146" width="3.6" height="2" rx="0.8" fill="#e8e8e8"/>
<rect x="1728" y="142" width="1" height="8" fill="#c8c8c8"/>
<rect x="1726.7" y="146" width="3.6" height="2" rx="0.8" fill="#e8e8e8"/>
<rect x="1731" y="138.3" width="1" height="9.9" fill="#c8c8c8"/>
<rect x="1729.7" y="140.3" width="3.6" height="6.9" rx="0.8" fill="#e8e8e8"/>
<rect x="1730.5" y="141.3" width="2" height="4.9" fill="#3fae4f"/>
</g>
<rect x="1672" y="104" width="1" height="24" fill="#c8c8c8"/>
<rect x="1670.7" y="107.4" width="3.6" height="14.9" rx="0.8" fill="#e8e8e8"/>
<rect x="1671.5" y="108.4" width="2" height="12.9" fill="#3fae4f"/>
<rect x="1676" y="89.5" width="1" height="44.1" fill="#c8c8c8"/>
<rect x="1674.7" y="91.5" width="3.6" height="14.9" rx="0.8" fill="#e8e8e8"/>
<rect x="1675.5" y="92.5" width="2" height="12.9" fill="#e0463c"/>
<rect x="1680" y="134" width="1" height="44.4" fill="#c8c8c8"/>
<rect x="1678.7" y="136.4" width="3.6" height="17.7" rx="0.8" fill="#e8e8e8"/>
<rect x="1679.5" y="137.4" width="2" height="15.7" fill="#e0463c"/>
<rect x="1684" y="163" width="1" height="26.6" fill="#c8c8c8"/>
<rect x="1682.7" y="166.8" width="3.6" height="16.2" rx="0.8" fill="#e8e8e8"/>
<rect x="1683.5" y="167.8" width="2" height="14.2" fill="#e0463c"/>
<rect x="1399" y="203" width="1" height="13" fill="#c8c8c8"/>
<rect x="1397.7" y="206" width="3.6" height="8" rx="0.8" fill="#e8e8e8"/>
<rect x="1398.5" y="207" width="2" height="6" fill="#3fae4f"/>
<rect x="1403" y="201" width="1" height="25" fill="#c8c8c8"/>
<rect x="1401.7" y="204" width="3.6" height="16" rx="0.8" fill="#e8e8e8"/>
<rect x="1402.5" y="205" width="2" height="14" fill="#e0463c"/>
<rect x="1407" y="202" width="1" height="14" fill="#c8c8c8"/>
<rect x="1405.7" y="205" width="3.6" height="8" rx="0.8" fill="#e8e8e8"/>
<rect x="1406.5" y="206" width="2" height="6" fill="#3fae4f"/>
<rect x="1411" y="218" width="1" height="23" fill="#c8c8c8"/>
<rect x="1409.7" y="222" width="3.6" height="17" rx="0.8" fill="#e8e8e8"/>
<rect x="1410.5" y="223" width="2" height="15" fill="#e0463c"/>
<rect x="1415" y="236" width="1" height="14" fill="#c8c8c8"/>
<rect x="1413.7" y="239" width="3.6" height="9" rx="0.8" fill="#e8e8e8"/>
<rect x="1414.5" y="240" width="2" height="7" fill="#3fae4f"/>
<rect x="1581" y="171" width="1" height="15" fill="#c8c8c8"/>
<rect x="1579.7" y="174" width="3.6" height="10" rx="0.8" fill="#e8e8e8"/>
<rect x="1580.5" y="175" width="2" height="8" fill="#3fae4f"/>
<rect x="1594" y="170" width="1" height="22" fill="#c8c8c8"/>
<rect x="1592.7" y="172" width="3.6" height="18" rx="0.8" fill="#e8e8e8"/>
<rect x="1593.5" y="173" width="2" height="16" fill="#e0463c"/>
<rect x="1597" y="184" width="1" height="18" fill="#c8c8c8"/>
<rect x="1595.7" y="186" width="3.6" height="14" rx="0.8" fill="#e8e8e8"/>
<rect x="1596.5" y="187" width="2" height="12" fill="#e0463c"/>
<rect x="1601" y="191" width="1" height="17" fill="#c8c8c8"/>
<rect x="1599.7" y="193" width="3.6" height="12" rx="0.8" fill="#e8e8e8"/>
<rect x="1600.5" y="194" width="2" height="10" fill="#e0463c"/>
<rect x="1652" y="141" width="1" height="21" fill="#c8c8c8"/>
<rect x="1650.7" y="145" width="3.6" height="14" rx="0.8" fill="#e8e8e8"/>
<rect x="1651.5" y="146" width="2" height="12" fill="#e0463c"/>
<rect x="1656" y="142" width="1" height="30" fill="#c8c8c8"/>
<rect x="1654.7" y="145" width="3.6" height="14" rx="0.8" fill="#e8e8e8"/>
<rect x="1655.5" y="146" width="2" height="12" fill="#3fae4f"/>
<polyline fill="none" stroke="#d06c2b" stroke-width="1.4" stroke-linejoin="miter" points="0,690.5 5.6,739.5 9.1,735.1 13.1,713.8 17.2,720.2 21,720.2 25.4,711.5 29.4,701.5 33.3,703.9 36.8,679.4 40.7,686.4 44.7,729 49.1,710.6 52.9,704.5 56.9,687.8 61,720.8 64.8,700.4 68.7,699.2 73.6,691 77.1,686.1 81,671.7 85,710.6 88.5,721.5 92,712.4 96.4,708.9 98.1,705.3 103.4,686.1 107.8,668.9 112.1,667.7 115.6,677.3 120.9,703.6 124.4,699.2 131.8,735.1 135.8,729.9 139.3,694 144,698.3 148.6,690.5 152.1,672.9 155.9,670.7 159.5,661.9 163.3,692.7 168.6,705.7 175.6,685.7 179.6,715.5 183.1,701.8 187.5,715.5 192.4,701.8 195.4,677.7 199.4,668.2 203.3,680.8 207.6,698.3 211.1,729 215.9,739.5 219.4,726.4 223.4,739.5 227.4,716.7 231.3,729.9 234.8,739 239.7,726 243.6,700.1 247.1,720.2 250.9,703.2 254.1,701.8 258.5,696.2 263.7,709.2 270.7,694.5 274.2,694.5 278.3,670 282.1,691.3 286.5,684 290.9,703.9 294.4,703.2 302.3,719.4 306.1,719.4 310.7,686.9 314.5,691 318.4,675.9 322.4,674.2 325.9,707.1 334.7,749.2 342.2,690.5 346.1,688.2 353.1,684.3 358.3,687.8 362.2,711.5 365.7,724.3 369.7,699.7 373.2,709.7 377.3,693.4 382,714.5 385.5,711.5 389.9,711.5 400.7,670 405.6,686.4 409.5,670.7 417,661.5 421.1,651.9 424.9,654.5 429.3,647.2 433.3,682.9 437.2,680.5 441,670.7 444.2,672.1 448.1,656.6 453,655.4 456.8,681.7 460.8,670.7 464.9,705.3 468.4,711 472.6,758.3 476.6,736 480.6,733.7 484.5,750.9 488,757.6 492.4,759.7 495.9,763.5 502.9,735.1 508.2,698.3 512.2,686.9 515.7,729.9 519.5,724.3 524.8,704.5 528.3,703.9 532.2,689.9 536.2,685.7 540.2,686.9 543.2,686.4 548.5,711.5 552,694.5 559.5,678.2 563.3,691 566.9,710.3 571.8,712.7 576,693.4 579.5,705.7 583.5,697.5 587,730.2 590.9,730.8 595.4,712 599.3,698.3 607.2,721.5 610.7,699.2 614.7,702.2 620,725.5 623.5,721.5 627.3,707.1 631.2,715 634.7,693.1 638.2,720.2 643.1,723.2 647.5,723.2 651,699.2 655,701.5 658,701.5 662,688.7 667.3,714.1 670.8,727.2 674.6,711 678.1,740 682,734.3 686,744.2 690.7,704.5 694.2,714.1 699.2,714.1 702.3,711 705.8,685.7 709.7,712.7 718.4,679.9 721.9,696.2 726.3,696.2 729.3,682.2 733.3,735.1 738.6,718 745.6,701 749.6,710.3 757,684.7 762.2,719.4 765.4,701.8 769.6,722 777.1,715.9 781.2,722.9 785.9,713.8 789.9,710.3 792.9,701 797.6,695.2 800.8,670.7 804.6,699.7 809.5,710.3 813.4,694.5 817.4,695.7 820.9,691 825,694.5 828.5,689.2 833.2,701 837.2,695.7 840.7,667.7 843.7,659.4 848.1,655.4 851.9,677 856.5,671.7 860.7,721.5 864.7,701 868.2,720.2 871.7,692.2 876.1,680.8 880.2,664.2 884.4,655.9 888.4,677.7 895.9,657.2 899.8,680.8 904.7,678.2 908.5,714.5 912.1,705 915.9,717.6 919.9,710.3 923.4,725.5 928.2,724.6 932.2,749.2 936.2,708 939.7,689.9 943.2,698.7 947.1,728.1 952,724.6 955.5,740 959,745.3 963.2,757.9 967.2,730.8 971.3,744.2 976,731.6 979.5,712.7 983.5,711 987,717.6 990.9,701 994.4,695.7 999.7,724.3 1004,716.7 1011.1,711 1014.6,691.7 1018.6,715 1023.3,705.7 1030.9,744.8 1035.6,739.5 1042.6,735.1 1050.5,698 1054.3,733.7 1057.8,727.8 1062.4,736 1065.9,730.8 1070.6,730.8 1074.7,747.8 1078.2,728.5 1082,743 1085.9,767.6 1089.9,761.8 1094.3,735.5 1097.8,735.5 1102.2,749.2 1106.2,740 1109.7,719.7 1113.6,746.5 1118.5,718 1125.5,695.7 1129.3,694.5 1133.2,708.9 1137.2,701 1141.9,714.1 1153.5,675.9 1157.4,715.9 1160.9,724.6 1162.1,723.7 1169.6,730.2 1173.7,730.8 1177.2,756.5 1184.2,712.4 1189.4,718 1193.3,714.1 1197.1,733.4 1200.7,731.6 1204.7,726 1207.7,753.5 1213.4,764.9 1217.5,750 1224.5,759.3 1231,729.9 1237.1,712.4 1241,717.3 1244.5,717.6 1248.5,729 1252,701.8 1256,702.7 1261.3,691.3 1264.8,669.4 1268.3,665.9 1272.1,647.5 1275.6,646.6 1279.5,661.9 1284.8,656.3 1288.8,650.7 1292.8,650.7 1296.3,654.9 1303.3,689.9 1308.6,682.6 1315.6,718 1319.5,718 1326.8,667.1 1331.7,687.5 1336.1,689.2 1339.6,676.4 1343.6,674.2 1347.8,661.2 1351.3,657.2 1355.9,655.9 1359.8,662.4 1366.8,647.5 1374.6,640.2 1379.4,672.4 1383.4,656.3 1386.9,651 1391.3,647.5 1398,641.4 1403.2,684.3 1407.1,670 1410.6,724.3 1414.4,724.3 1418.5,721.1 1422.5,724.3 1426.3,746 1430.7,753 1434.8,754.4 1438.6,727.2 1442.1,733.4 1446,735.1 1450.5,744.8 1454.4,739 1458.4,743.5 1461.9,735.5 1465.8,708 1469.6,708 1474.5,685.7 1478.4,698.3 1481.9,726.4 1485.9,733.7 1493.8,717.6 1498.2,706.2 1502.2,689.6 1506.1,689.6 1509.9,694.5 1513.4,691.7 1521.8,668.2 1525.7,700.1 1529.7,701.5 1533.8,708.9 1537.3,677 1540.8,688.7 1546,682.9 1549.9,672.9 1553.4,672.4 1557.8,665.9 1560.7,664.2 1569.2,648.4 1576.2,647.2 1580.5,637.9 1584.6,637.9 1588.4,635.3 1593.3,712.4 1600.7,740.4 1604.5,715.9 1608.6,710.3 1612.1,719.7 1616.8,713.8 1620.8,711 1624.9,689.2 1628.4,691.3 1632.6,679.9 1635.7,696.2 1641,707.1 1647.7,673.8 1652.9,670 1659.9,656.6 1664.1,652.4 1668.7,649.6 1672.2,641.9 1676,641.9 1679.5,734.8 1683.4,754.8 1688,721.5 1691.8,721.5 1695.7,733.7 1703.2,710.3 1707.2,717.3 1712,710.3 1716,731.3 1719.5,713.8 1723.7,719.4 1726.9,719.4 1731.2,710.3"/>
<g fill="#ffffff" font-weight="bold" font-size="13.6" text-anchor="end">
<text x="1786.5" y="30.5">33,65</text>
<text x="1786.5" y="60.6">31,90</text>
<text x="1786.5" y="93">30,15</text>
<text x="1786.5" y="126.8">28,40</text>
<text x="1786.5" y="162.5">26,65</text>
<text x="1786.5" y="201.5">24,90</text>
<text x="1786.5" y="243">23,15</text>
<text x="1786.5" y="287.3">21,40</text>
<text x="1786.5" y="335.5">19,65</text>
<text x="1786.5" y="388.5">17,90</text>
<text x="1786.5" y="446.5">16,15</text>
<text x="1786.5" y="511.7">14,40</text>
<text x="1786.5" y="585.6">12,65</text>
<text x="1786.5" y="688.7">70,00</text><text x="1786.5" y="763.7">30,00</text>
</g>
<path d="M1734.5,151 L1745,142 L1797,142 Q1799,142 1799,144 L1799,158 Q1799,160 1797,160 L1745,160 Z" fill="#1f7fdc"/>
<text x="1749.5" y="156" fill="#000000" font-weight="bold" font-size="13.8" textLength="38.3" lengthAdjust="spacingAndGlyphs">26,98</text>
<path d="M1734.5,141 L1745,132 L1797,132 Q1799,132 1799,134 L1799,148 Q1799,150 1797,150 L1745,150 Z" fill="#ffffff"/>
<text x="1749.5" y="146" fill="#000000" font-weight="bold" font-size="13.8" textLength="38.3" lengthAdjust="spacingAndGlyphs">27,49</text>
<path d="M1734.5,172.3 L1745,163.3 L1797,163.3 Q1799,163.3 1799,165.3 L1799,179.3 Q1799,181.3 1797,181.3 L1745,181.3 Z" fill="#000000"/>
<text x="1749.5" y="177.3" fill="#ffffff" font-weight="bold" font-size="13.8" textLength="38.3" lengthAdjust="spacingAndGlyphs">26,03</text>
<path d="M1734.5,253.8 L1745,244.8 L1797,244.8 Q1799,244.8 1799,246.8 L1799,260.8 Q1799,262.8 1797,262.8 L1745,262.8 Z" fill="#e2392f"/>
<text x="1749.5" y="258.8" fill="#000000" font-weight="bold" font-size="13.8" textLength="38.3" lengthAdjust="spacingAndGlyphs">22,54</text>
<path d="M1734.5,710 L1745,701 L1797,701 Q1799,701 1799,703 L1799,717 Q1799,719 1797,719 L1745,719 Z" fill="#e8742a"/>
<text x="1749.5" y="715" fill="#000000" font-weight="bold" font-size="13.8" textLength="38.3" lengthAdjust="spacingAndGlyphs">56,12</text>
<rect x="1715" y="601.5" width="19" height="7" rx="3.5" fill="#3cc46e"/>
<g fill="#dedede" font-weight="bold" font-size="13">
<text x="28.3" y="831">jun</text>
<text x="106.7" y="831">jul</text>
<text x="199" y="831">ago</text>
<text x="286" y="831">set</text>
<text x="369" y="831">out</text>
<text x="460" y="831">nov</text>
<text x="535" y="831">dez</text>
<text x="609.3" y="831">jan</text>
<text x="696.7" y="831">fev</text>
<text x="776" y="831">mar</text>
<text x="851" y="831">abr</text>
<text x="931" y="831">mai</text>
<text x="1013.3" y="831">jun</text>
<text x="1093.3" y="831">jul</text>
<text x="1183.4" y="831">ago</text>
<text x="1266.9" y="831">set</text>
<text x="1354.8" y="831">out</text>
<text x="1444.8" y="831">nov</text>
<text x="1521.4" y="831">dez</text>
<text x="1599" y="831">jan</text>
<text x="1681.7" y="831">fev</text>
</g>
<rect x="2" y="837.5" width="605" height="19" fill="#2c2d38"/>
<rect x="610" y="837.5" width="986" height="19" fill="#2c2d38"/>
<rect x="1599" y="837.5" width="137" height="19" fill="#2c2d38"/>
<g fill="#9c9ea8" font-size="14.4">
<text x="289" y="851.3" textLength="30" lengthAdjust="spacingAndGlyphs">2024</text><text x="1088.3" y="851.3" textLength="29.4" lengthAdjust="spacingAndGlyphs">2025</text><text x="1651.7" y="851.3" textLength="30" lengthAdjust="spacingAndGlyphs">2026</text>
</g>
<rect x="1738" y="815" width="63" height="41" fill="#333333"/>
<rect x="1800" y="0" width="1" height="856" fill="#4a4b4e"/>
<path d="M1801,270.5 L1791,270.5 Q1788,270.5 1788,273.5 L1788,357.5 Q1788,360.5 1791,360.5 L1801,360.5 Z" fill="#3a3c44"/>
<path d="M1796,312 L1793,315.5 L1796,319" fill="none" stroke="#b8b8b8" stroke-width="1.3"/>
<text x="8.8" y="645.6" fill="#ffffff" font-weight="bold" font-size="15.2" textLength="83" lengthAdjust="spacingAndGlyphs">IFR (RSI) [7]</text>
<rect x="96.4" y="631.4" width="46.4" height="18" rx="3" fill="#e8742a"/>
<text x="101" y="645.9" fill="#111111" stroke="#111111" stroke-width="0.45" font-size="15.3" textLength="37" lengthAdjust="spacingAndGlyphs">56,12</text>
<rect x="4.3" y="6.5" width="19.7" height="18.5" rx="3" fill="#1c1c1c"/>
<defs><linearGradient id="gb" x1="0" y1="0" x2="0" y2="1"><stop offset="0" stop-color="#ffd95a"/><stop offset="1" stop-color="#d89a22"/></linearGradient><radialGradient id="gg"><stop offset="0.55" stop-color="#22dc72"/><stop offset="0.75" stop-color="#1f9a5a"/><stop offset="1" stop-color="#1f5a48" stop-opacity="0.6"/></radialGradient></defs>
<g stroke-linejoin="round"><path d="M7.2,15.2 L13.2,15.2 L14.6,21.4 L5.2,21.4 Z" fill="url(#gb)" stroke="#e3a92c" stroke-width="0.8"/><path d="M14.6,16 L20.4,16 L22.6,22.6 L13.2,22.6 Z" fill="url(#gb)" stroke="#e3a92c" stroke-width="0.8"/><path d="M10.6,9 L16.4,9 L18,15.6 L9,15.6 Z" fill="url(#gb)" stroke="#eab334" stroke-width="0.8"/><path d="M5.2,21.4 L14.6,21.4 L13.8,22.6 L6,22.6 Z" fill="#b47a18"/></g>
<text x="27.8" y="20" fill="#ffffff" font-weight="bold" font-size="15.2" textLength="80" lengthAdjust="spacingAndGlyphs">GOLD11 1D</text>
<circle cx="125.2" cy="14.8" r="8.4" fill="#f4f4f6"/>
<text x="125.2" y="18.2" fill="#4a6fc8" font-size="8" font-weight="bold" text-anchor="middle">[B]</text>
<circle cx="146.5" cy="14.8" r="7.4" fill="#e4e4e4"/>
<rect x="142" y="13.6" width="9" height="2.6" fill="#111"/>
<circle cx="164.2" cy="14.8" r="8.4" fill="url(#gg)"/>
<text x="179" y="20" fill="#a6c8f0" font-weight="bold" font-size="15.2">(</text>
<text x="183.3" y="20" fill="#ffffff" font-weight="bold" font-size="15.2">A</text>
<text x="198" y="20" fill="#a6c8f0" font-weight="bold" font-size="15.2" textLength="37.2" lengthAdjust="spacingAndGlyphs">27,26</text>
<text x="238.9" y="20" fill="#ffffff" font-weight="bold" font-size="15.2">M</text>
<text x="256" y="20" fill="#a6c8f0" font-weight="bold" font-size="15.2" textLength="37.8" lengthAdjust="spacingAndGlyphs">27,50</text>
<text x="297.5" y="20" fill="#ffffff" font-weight="bold" font-size="15.2">M</text>
<text x="315" y="20" fill="#a6c8f0" font-weight="bold" font-size="15.2" textLength="37.4" lengthAdjust="spacingAndGlyphs">27,02</text>
<text x="356.6" y="20" fill="#ffffff" font-weight="bold" font-size="15.2">F</text>
<text x="367.6" y="20" fill="#a6c8f0" font-weight="bold" font-size="15.2" textLength="37.3" lengthAdjust="spacingAndGlyphs">27,49</text>
<text x="409.2" y="20" fill="#ffffff" font-weight="bold" font-size="15.2">V</text>
<text x="422" y="20" fill="#a6c8f0" font-weight="bold" font-size="15.2" textLength="41.5" lengthAdjust="spacingAndGlyphs">1,14%</text>
<text x="467.8" y="20" fill="#a6c8f0" font-weight="bold" font-size="15.2">)</text>
<rect x="478.8" y="5.6" width="18.6" height="18.6" rx="5" fill="rgba(0,0,20,0.06)" stroke="#8090a6" stroke-width="1.2"/>
<path d="M485.2,11.8 L485.2,17.8 L491.4,17.8 Z" fill="#8d9aac"/>
<rect x="503.8" y="5.6" width="18.6" height="18.6" rx="5" fill="rgba(0,0,20,0.06)" stroke="#8090a6" stroke-width="1.2"/>
<path d="M512.9,10.6 L512.9,19.2 M508.6,14.9 L517.2,14.9" stroke="#aab5c5" stroke-width="1.9"/>
<text x="533" y="20" fill="#ffffff" font-weight="bold" font-size="15.2" textLength="143.5" lengthAdjust="spacingAndGlyphs">Média Móvel E [200]</text>
<rect x="682" y="5.7" width="44" height="17.7" rx="3" fill="#e0403a"/>
<text x="686.3" y="20" fill="#000000" font-weight="bold" font-size="15.2" textLength="36" lengthAdjust="spacingAndGlyphs">22,54</text>
<text x="727.8" y="20" fill="#ffffff" font-weight="bold" font-size="15.2">,</text>
<text x="736.8" y="20" fill="#ffffff" font-weight="bold" font-size="15.2" textLength="134.4" lengthAdjust="spacingAndGlyphs">Média Móvel E [50]</text>
<rect x="876.7" y="5.7" width="44.6" height="17.3" rx="3" fill="#000000"/>
<text x="880.8" y="20" fill="#ffffff" font-weight="bold" font-size="15.2" textLength="36" lengthAdjust="spacingAndGlyphs">26,03</text>
<text x="923.7" y="20" fill="#ffffff" font-weight="bold" font-size="15.2">,</text>
<text x="931.1" y="20" fill="#ffffff" font-weight="bold" font-size="15.2" textLength="135.6" lengthAdjust="spacingAndGlyphs">Média Móvel E [21]</text>
<rect x="1072.2" y="5.7" width="44.6" height="17.5" rx="3" fill="#2a8ae8"/>
<text x="1076.5" y="20" fill="#000000" font-weight="bold" font-size="15.2" textLength="36" lengthAdjust="spacingAndGlyphs">26,98</text>
</svg>
<div id="top"></div>
</body></html>
